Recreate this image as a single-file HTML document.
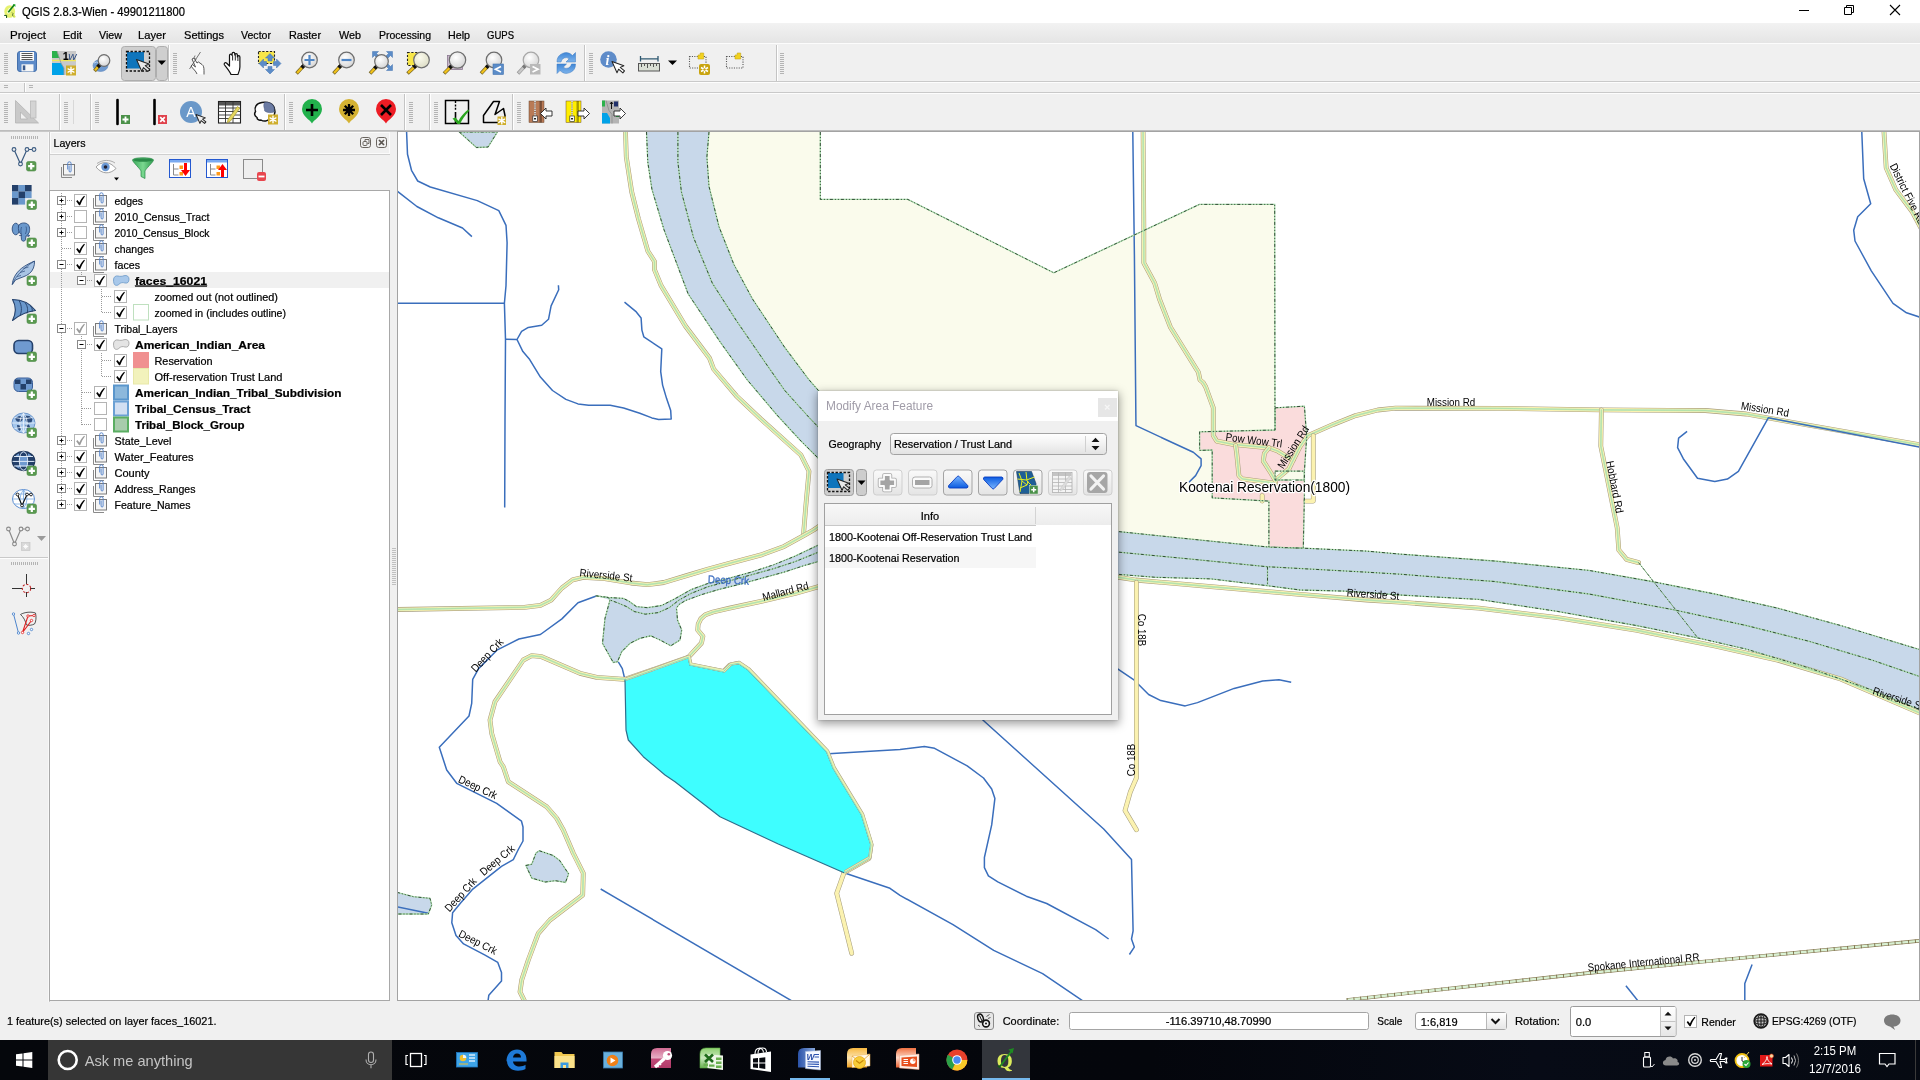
<!DOCTYPE html>
<html><head><meta charset="utf-8"><title>QGIS</title>
<style>
*{box-sizing:border-box;margin:0;padding:0}
html,body{width:1920px;height:1080px;overflow:hidden;background:#f0f0f0;font-family:"Liberation Sans",sans-serif;font-size:11px;color:#000}
.abs{position:absolute}
svg{will-change:transform}
.k text{stroke:#000;stroke-width:.22px}
.k text.n{stroke:none}
#title{left:0;top:0;width:1920px;height:23px;background:#fff}
#title .t{left:22px;top:4px;font-size:12px;letter-spacing:-0.1px}
#menu{left:0;top:23px;width:1920px;height:21px;background:linear-gradient(#f1f1f1,#e6e6e6);border-bottom:1px solid #fdfdfd}
#menu span{position:absolute;top:5px;font-size:11px}
.hline{position:absolute;left:0;width:1920px;height:1px}
#layers-title{left:51px;top:133px;width:339px;height:21px;background:#f0f0f0;border:1px solid #fafafa}
#tree{left:50px;top:190px;width:340px;height:811px;background:#fff;border:1px solid #a3a3a3}
#map{left:397px;top:131px;width:1523px;height:870px;background:#fff;border:1px solid #a3a3a3;overflow:hidden}
#status{left:0;top:1002px;width:1920px;height:38px;background:#f0f0f0}
#taskbar{left:0;top:1040px;width:1920px;height:40px;background:#0b0f1c}
.row{position:absolute;left:0;height:16px;width:338px;white-space:nowrap}
.row span{position:absolute;top:2px;font-size:11px}
.b{font-weight:bold}
</style></head><body>
<svg class="k" width="1920" height="132" viewBox="0 0 1920 132" style="position:absolute;left:0;top:0;font-family:'Liberation Sans',sans-serif">
<defs><radialGradient id="lg" cx="0.4" cy="0.35" r="0.7"><stop offset="0" stop-color="#fff"/><stop offset="1" stop-color="#d4d4d4"/></radialGradient><radialGradient id="lgy" cx="0.4" cy="0.35" r="0.7"><stop offset="0" stop-color="#fbfbee"/><stop offset="1" stop-color="#dcdcc4"/></radialGradient><linearGradient id="rf" x1="0" y1="0" x2="0" y2="1"><stop offset="0" stop-color="#3f86d6"/><stop offset="1" stop-color="#7db4ec"/></linearGradient></defs>
<rect x="0" y="0" width="1920" height="23" fill="#fff"/>
<ellipse cx="9.700" cy="11.500" rx="5.400" ry="6.300" fill="#e6f270"/><ellipse cx="9.200" cy="10.800" rx="1.600" ry="3.200" fill="#f8fbd8" transform="rotate(25 9.2 10.8)"/><path d="M12.500,13.500l2.300,4" stroke="#d8e860" stroke-width="2.200"/><path d="M12,12.500l1.200,1.300 -1,1.200 1.200,1.300" stroke="#3a5a2a" stroke-width="0.700" fill="none"/>
<path d="M8.300,12.200L14.300,4.800" stroke="#12801a" stroke-width="1.700"/><path d="M12.800,4.300h2.600v2.600z" fill="#18a020"/><path d="M4.200,15.400h2.400v2.600" stroke="#0c4a10" stroke-width="1" fill="none"/>
<text x="22" y="15.5" font-size="12.2" fill="#000" textLength="163" lengthAdjust="spacingAndGlyphs">QGIS 2.8.3-Wien - 49901211800</text>
<path d="M1799,10.5h10" stroke="#000" stroke-width="1"/>
<path d="M1844.5,7.5h7v7h-7zM1846.5,7.5v-2h7v7h-2" stroke="#000" stroke-width="1" fill="none"/>
<path d="M1890,5l10,10M1900,5l-10,10" stroke="#000" stroke-width="1.1"/>
<defs><linearGradient id="mg" x1="0" y1="0" x2="0" y2="1"><stop offset="0" stop-color="#f2f2f2"/><stop offset="1" stop-color="#e4e4e4"/></linearGradient></defs>
<rect x="0" y="23" width="1920" height="21" fill="url(#mg)"/>
<rect x="0" y="43" width="1920" height="1" fill="#fcfcfc"/>
<text x="10" y="39" font-size="11" textLength="36" lengthAdjust="spacingAndGlyphs">Project</text>
<text x="63" y="39" font-size="11" textLength="19" lengthAdjust="spacingAndGlyphs">Edit</text>
<text x="99" y="39" font-size="11" textLength="23" lengthAdjust="spacingAndGlyphs">View</text>
<text x="138" y="39" font-size="11" textLength="28" lengthAdjust="spacingAndGlyphs">Layer</text>
<text x="184" y="39" font-size="11" textLength="40" lengthAdjust="spacingAndGlyphs">Settings</text>
<text x="241" y="39" font-size="11" textLength="30" lengthAdjust="spacingAndGlyphs">Vector</text>
<text x="289" y="39" font-size="11" textLength="32" lengthAdjust="spacingAndGlyphs">Raster</text>
<text x="339" y="39" font-size="11" textLength="22" lengthAdjust="spacingAndGlyphs">Web</text>
<text x="379" y="39" font-size="11" textLength="52" lengthAdjust="spacingAndGlyphs">Processing</text>
<text x="448" y="39" font-size="11" textLength="22" lengthAdjust="spacingAndGlyphs">Help</text>
<text x="487" y="39" font-size="11" textLength="27" lengthAdjust="spacingAndGlyphs">GUPS</text>
<rect x="0" y="44" width="1920" height="88" fill="#f0f0f0"/>
<rect x="0" y="81" width="1920" height="1" fill="#c9c9c9"/>
<rect x="0" y="82" width="1920" height="1" fill="#fdfdfd"/>
<rect x="0" y="92" width="1920" height="1" fill="#c9c9c9"/>
<rect x="0" y="93" width="1920" height="1" fill="#fdfdfd"/>
<rect x="0" y="130" width="1920" height="1" fill="#bdbdbd"/>
<rect x="0" y="131" width="1920" height="1" fill="#c8c8c8"/>
<path d="M4,53.5h4M4,55.5h4M4,57.5h4M4,59.5h4M4,61.5h4M4,63.5h4M4,65.5h4M4,67.5h4M4,69.5h4M4,71.5h4M4,73.5h4" stroke="#b4b4b4" stroke-width="1" fill="none"/>
<rect x="17.5" y="51.5" width="19" height="20" rx="2.5" fill="#5c8ac8" stroke="#4470ac"/>
<rect x="20" y="52" width="14" height="8.700" fill="#fbfbfb"/><path d="M21.500,53.500h11M21.500,55.500h11M21.500,57.500h11M21.500,59.500h11" stroke="#555" stroke-width="1"/>
<rect x="21.500" y="64.300" width="12" height="7.200" fill="#f6f6f6"/><rect x="22.800" y="65.400" width="2.500" height="4.800" fill="#3a5a8c"/>
<rect x="52" y="51" width="24" height="24" fill="#c9c9c9"/><path d="M52,51h5l2.5,7h-7.5z" fill="#2bb24c"/><path d="M52,63h9l3,5v7h-12z" fill="#00a2e8"/><path d="M52,60.5h24" stroke="#f2e85a" stroke-width="1.4"/><path d="M57,51l4,12 3,5v7" stroke="#9a9a9a" stroke-width="0.8" fill="none"/>
<text x="63" y="60" font-size="10" font-weight="bold" fill="#000">1</text><text x="68" y="60" font-size="9" font-style="italic" fill="#20407a" class="n">W</text>
<rect x="66.0" y="65.5" width="10.0" height="10.0" fill="#cfae2c"/>
<path d="M71.0,67.3v6.4M68.1,68.9l5.8,3.2M73.9,68.9l-5.8,3.2" stroke="#fff" stroke-width="1.4" stroke-linecap="round"/>
<ellipse cx="100.500" cy="65.500" rx="7.500" ry="6" fill="#6f9ad0" stroke="#5a84bc" stroke-width="0.600"/><path d="M94,63q3,-2 5,0t5,1" stroke="#b8d0ec" fill="none"/>
<path d="M99.8,64.7L94.5,71.0" stroke="#7a6a28" stroke-width="3.6" stroke-linecap="butt"/>
<path d="M99.2,65.3L95.1,70.4" stroke="#f2c21a" stroke-width="2.2"/>
<path d="M100.3,64.2L97.6,66.9" stroke="#111" stroke-width="3.6"/>
<circle cx="104.0" cy="60.5" r="5.8" fill="url(#lg)" stroke="#6e6e6e" stroke-width="1.2"/>
<rect x="121.5" y="46.500" width="34" height="34" rx="3" fill="#cfcfcf" stroke="#aeaeae"/>
<rect x="156.5" y="46.500" width="11" height="34" rx="3" fill="#cfcfcf" stroke="#aeaeae"/>
<rect x="127" y="52" width="17" height="16.500" fill="#0f75bc"/>
<rect x="126.5" y="51.500" width="23" height="19.500" fill="none" stroke="#111" stroke-width="1.3" stroke-dasharray="2.4 1.6"/>
<path d="M136.5,59.5 L136.5,72.5 L139.5,69.7 L142.1,75.1 L144.5,73.9 L141.9,68.7 L146.1,68.7Z" fill="#e8e8e8" stroke="#222" stroke-width="1" stroke-linejoin="round" transform="rotate(-24 136.5 59.5)"/>
<path d="M157.500,60.500h8.500l-4.250,4.500z" fill="#000"/>
<path d="M168.5,45V81" stroke="#c4c4c4"/><path d="M169.5,45V81" stroke="#fff"/>
<path d="M173,53.5h4M173,55.5h4M173,57.5h4M173,59.5h4M173,61.5h4M173,63.5h4M173,65.5h4M173,67.5h4M173,69.5h4M173,71.5h4M173,73.5h4" stroke="#b4b4b4" stroke-width="1" fill="none"/>
<path d="M197,74c-1,-3 -4,-5 -6,-8l1.500,-1.500 3,2.500 -3.500,-8 2,-1 3,5 1.500,-1 3.500,2.500c1.500,1 2,3 2,6v4" fill="#fff" stroke="#444" stroke-width="0.9" stroke-linejoin="round"/><path d="M200.500,52l-11,17M195,55.500q-2,2.500 1,4" stroke="#555" stroke-width="0.8" fill="none"/>
<path d="M231,74.500c-1.500,-3.500 -4.500,-7 -6.500,-9.500c-1,-1.500 0.500,-3 2,-2l3,3v-10.500c0,-1.800 2.600,-1.800 2.600,0v-1.800c0,-1.800 2.700,-1.800 2.700,0v1.200c0,-1.700 2.600,-1.700 2.600,0v2c0,-1.600 2.500,-1.600 2.500,0v10c0,3 -1,5 -2,7.600z" fill="#fff" stroke="#111" stroke-width="1.200" stroke-linejoin="round"/><path d="M232.600,55.500v5M235.300,54.500v6M237.900,56v5" stroke="#111" stroke-width="0.9"/>
<rect x="258.500" y="51.500" width="16" height="12" fill="#f7e648" stroke="#222" stroke-width="1.1" stroke-dasharray="2.2 1.600"/>
<path d="M270,53.500l4.500,4.500h-2.500v3h-4v-3h-2.500zM281,63.500l-4.500,4.500v-2.500h-3v-4h3v-2.500zM270,74l-4.500,-4.500h2.500v-3h4v3h2.500zM259,63.500l4.500,-4.500v2.500h3v4h-3v2.500z" fill="#5b8cc8" stroke="#4474b0" stroke-width="0.5"/>
<path d="M303.9,65.6L296.5,73.5" stroke="#7a6a28" stroke-width="3.6" stroke-linecap="butt"/>
<path d="M303.3,66.2L297.1,72.9" stroke="#f2c21a" stroke-width="2.2"/>
<path d="M304.4,65.1L301.7,67.8" stroke="#111" stroke-width="3.6"/>
<circle cx="309.5" cy="60.0" r="7.8" fill="url(#lg)" stroke="#6e6e6e" stroke-width="1.2"/>
<path d="M304.500,60h10M309.500,55v10" stroke="#4f86c6" stroke-width="2.200"/>
<path d="M340.9,65.6L333.5,73.5" stroke="#7a6a28" stroke-width="3.6" stroke-linecap="butt"/>
<path d="M340.3,66.2L334.1,72.9" stroke="#f2c21a" stroke-width="2.2"/>
<path d="M341.4,65.1L338.7,67.8" stroke="#111" stroke-width="3.6"/>
<circle cx="346.5" cy="60.0" r="7.8" fill="url(#lg)" stroke="#6e6e6e" stroke-width="1.2"/>
<path d="M341.500,60h10" stroke="#4f86c6" stroke-width="2.200"/>
<path d="M372.500,51.500h6l-2,2 3,3 -2,2 -3,-3 -2,2zM392.500,51.500v6l-2,-2 -3,3 -2,-2 3,-3 -2,-2zM392.500,70.500h-6l2,-2 -3,-3 2,-2 3,3 2,-2z" fill="#5b8cc8" stroke="#4474b0" stroke-width="0.500"/>
<path d="M376.6,66.4L370.0,73.5" stroke="#7a6a28" stroke-width="3.6" stroke-linecap="butt"/>
<path d="M376.0,67.0L370.6,72.9" stroke="#f2c21a" stroke-width="2.2"/>
<path d="M377.1,65.9L374.4,68.6" stroke="#111" stroke-width="3.6"/>
<circle cx="381.5" cy="61.5" r="6.8" fill="url(#lg)" stroke="#6e6e6e" stroke-width="1.2"/>
<rect x="407.500" y="52.500" width="14" height="13" fill="#f7e648" stroke="#222" stroke-width="1.100" stroke-dasharray="2.200 1.600"/>
<path d="M415.9,65.6L407.5,73.5" stroke="#7a6a28" stroke-width="3.6" stroke-linecap="butt"/>
<path d="M415.3,66.2L408.1,72.9" stroke="#f2c21a" stroke-width="2.2"/>
<path d="M416.4,65.1L413.7,67.8" stroke="#111" stroke-width="3.6"/>
<circle cx="421.5" cy="60.0" r="7.8" fill="url(#lgy)" stroke="#6e6e6e" stroke-width="1.2"/>
<rect x="447.500" y="55.500" width="15" height="14" fill="#c9b8cc" stroke="#8a7890" stroke-width="0.800"/>
<path d="M451.6,65.9L444.0,73.5" stroke="#7a6a28" stroke-width="3.6" stroke-linecap="butt"/>
<path d="M451.0,66.5L444.6,72.9" stroke="#f2c21a" stroke-width="2.2"/>
<path d="M452.1,65.4L449.4,68.1" stroke="#111" stroke-width="3.6"/>
<circle cx="457.5" cy="60.0" r="8.2" fill="url(#lg)" stroke="#6e6e6e" stroke-width="1.2"/>
<path d="M488.4,65.6L481.0,73.5" stroke="#7a6a28" stroke-width="3.6" stroke-linecap="butt"/>
<path d="M487.8,66.2L481.6,72.9" stroke="#f2c21a" stroke-width="2.2"/>
<path d="M488.9,65.1L486.2,67.8" stroke="#111" stroke-width="3.6"/>
<circle cx="494.0" cy="60.0" r="7.8" fill="url(#lg)" stroke="#6e6e6e" stroke-width="1.2"/>
<rect x="493" y="64" width="10.500" height="10.500" fill="#5b8cc8" stroke="#4474b0" stroke-width="0.600"/><path d="M501,66.500l-5.500,2.800 5.500,2.800" stroke="#fff" stroke-width="1.700" fill="none"/>
<path d="M525.4,65.6L518.0,73.5" stroke="#9a9a9a" stroke-width="3.6" stroke-linecap="butt"/>
<path d="M524.8,66.2L518.6,72.9" stroke="#c8c8c8" stroke-width="2.2"/>
<path d="M525.9,65.1L523.2,67.8" stroke="#777" stroke-width="3.6"/>
<circle cx="531.0" cy="60.0" r="7.8" fill="url(#lg)" stroke="#a8a8a8" stroke-width="1.2"/>
<rect x="530" y="64" width="10.500" height="10.500" fill="#b9b9b9"/><path d="M532.500,66.500l5.500,2.800 -5.500,2.800" stroke="#fff" stroke-width="1.700" fill="none"/>
<path d="M557,62a9,9 0 0,1 15.500,-6.500l3,-3v9.500h-9.500l3.200,-3.200a5,5 0 0,0 -8.200,3.200z" fill="url(#rf)" stroke="#3a78c0" stroke-width="0.500"/>
<path d="M575.500,64a9,9 0 0,1 -15.500,6.500l-3,3v-9.500h9.500l-3.200,3.200a5,5 0 0,0 8.200,-3.200z" fill="url(#rf)" stroke="#3a78c0" stroke-width="0.500"/>
<path d="M584.5,45V81" stroke="#c4c4c4"/><path d="M585.5,45V81" stroke="#fff"/>
<path d="M589,53.5h4M589,55.5h4M589,57.5h4M589,59.5h4M589,61.5h4M589,63.5h4M589,65.5h4M589,67.5h4M589,69.5h4M589,71.5h4M589,73.5h4" stroke="#b4b4b4" stroke-width="1" fill="none"/>
<circle cx="608.500" cy="59.500" r="8.300" fill="#5f8cc9"/><text x="605.500" y="65" font-size="14" font-weight="bold" font-style="italic" font-family="Liberation Serif,serif" fill="#fff" class="n">i</text>
<path d="M612.0,61.5 L612.0,73.8 L614.9,71.2 L617.3,76.3 L619.6,75.2 L617.1,70.2 L621.1,70.2Z" fill="#fff" stroke="#222" stroke-width="1" stroke-linejoin="round" transform="rotate(-24 612.0 61.5)"/>
<path d="M640.500,56v5.500M658,56v5.500M640.500,58.800h17.500" stroke="#2e5870" stroke-width="1.300"/>
<rect x="638.500" y="63.500" width="21" height="7.500" fill="#dadfd5" stroke="#555" stroke-width="1"/><path d="M641.500,64v3M644.500,64v2M647.500,64v4M650.500,64v2M653.500,64v3M656.500,64v2" stroke="#444" stroke-width="0.900"/>
<path d="M668,60.500h9l-4.500,4.600z" fill="#000"/>
<rect x="689.5" y="56.500" width="16.500" height="11.500" fill="none" stroke="#555" stroke-width="1.100" stroke-dasharray="1.100 1.300"/>
<path d="M698.0,55h2.200v-2h3.500v6h-5.700z" fill="#f2d21e" stroke="#c8a818" stroke-width="0.600"/>
<rect x="726.5" y="56.500" width="16.500" height="11.500" fill="none" stroke="#555" stroke-width="1.100" stroke-dasharray="1.100 1.300"/>
<path d="M735.0,55h2.200v-2h3.500v6h-5.700z" fill="#f2d21e" stroke="#c8a818" stroke-width="0.600"/>
<rect x="699" y="64" width="11" height="11" rx="2" fill="#c9a40e"/><path d="M704.500,65.500v8M701,67.500l7,4M708,67.500l-7,4" stroke="#fff" stroke-width="1.500"/><circle cx="704.500" cy="69.500" r="1.200" fill="#c9a40e"/>
<path d="M776.5,45V81" stroke="#c4c4c4"/><path d="M777.5,45V81" stroke="#fff"/>
<path d="M780,53.5h4M780,55.5h4M780,57.5h4M780,59.5h4M780,61.5h4M780,63.5h4M780,65.5h4M780,67.5h4M780,69.5h4M780,71.5h4M780,73.5h4" stroke="#b4b4b4" stroke-width="1" fill="none"/>
<path d="M4,85.500h4M4,87.500h4M29,85.500h4M29,87.500h4" stroke="#b4b4b4"/>
<path d="M24.5,83V92" stroke="#c4c4c4"/><path d="M25.5,83V92" stroke="#fff"/>
<path d="M4,102.5h4M4,104.5h4M4,106.5h4M4,108.5h4M4,110.5h4M4,112.5h4M4,114.5h4M4,116.5h4M4,118.5h4M4,120.5h4M4,122.5h4" stroke="#b4b4b4" stroke-width="1" fill="none"/>
<path d="M15.500,100.500v22.500h23zM20.500,112v7h7z" fill="#c9c9c9" stroke="#b4b4b4" stroke-width="0.800" fill-rule="evenodd"/><rect x="30.500" y="101" width="5.500" height="17" fill="#d4d4d4" stroke="#b8b8b8" stroke-width="0.800"/>
<path d="M59.5,94V130" stroke="#c4c4c4"/><path d="M60.5,94V130" stroke="#fff"/>
<path d="M64,102.5h4M64,104.5h4M64,106.5h4M64,108.5h4M64,110.5h4M64,112.5h4M64,114.5h4M64,116.5h4M64,118.5h4M64,120.5h4M64,122.5h4" stroke="#b4b4b4" stroke-width="1" fill="none"/>
<path d="M73.500,100v24" stroke="#d8d8d8"/>
<path d="M90.5,94V130" stroke="#c4c4c4"/><path d="M91.5,94V130" stroke="#fff"/>
<path d="M95,102.5h4M95,104.5h4M95,106.5h4M95,108.5h4M95,110.5h4M95,112.5h4M95,114.5h4M95,116.5h4M95,118.5h4M95,120.5h4M95,122.5h4" stroke="#b4b4b4" stroke-width="1" fill="none"/>
<path d="M117.500,100v24" stroke="#000" stroke-width="2.600" stroke-linecap="round"/><rect x="121" y="115" width="9" height="9" fill="#4a9048"/><path d="M122.500,119.500h6M125.500,116.500v6" stroke="#fff" stroke-width="1.800"/>
<path d="M154.500,100v24" stroke="#000" stroke-width="2.600" stroke-linecap="round"/><rect x="158" y="115" width="9" height="9" fill="#e0424c"/><path d="M160.200,117.200l4.600,4.600M164.800,117.200l-4.600,4.600" stroke="#fff" stroke-width="1.700"/>
<circle cx="191" cy="112" r="11" fill="#6a98c9"/><text x="191" y="117" font-size="14" fill="#fff" text-anchor="middle" class="n">A</text>
<path d="M196.0,114.5 L196.0,124.2 L198.2,122.2 L200.2,126.2 L202.0,125.3 L200.1,121.4 L203.2,121.4Z" fill="#eee" stroke="#222" stroke-width="1" stroke-linejoin="round" transform="rotate(-24 196.0 114.5)"/>
<rect x="218.500" y="101.500" width="22" height="21.500" fill="#fff" stroke="#222" stroke-width="1.100"/><rect x="219" y="102" width="21" height="3.500" fill="#555"/><path d="M218.500,108h22M218.500,111.500h22M218.500,115h22M218.500,118.500h22M225.500,101.500v21.500M233,101.500v21.500" stroke="#333" stroke-width="0.900"/>
<path d="M237.500,106.500l2.200,1.800 -9,12.500 -3.400,2 0.800,-3.600z" fill="#e6d860" stroke="#a89a30" stroke-width="0.700"/>
<path d="M262,102.500c-6,1 -8,5 -6.500,9c-2,3 0,5 1.500,6c0,2 2,3 4,2.500c3,2 7,1 8,-1c5,-1 7,-6 5.500,-10c-1,-5 -6,-7.500 -12.500,-6.500z" fill="#fff" stroke="#111" stroke-width="1.500"/><path d="M264.500,102.500c4,-1 9,1 9.700,6l0,3.500c-3,1 -7,1 -9.500,-1c0,-3 -2,-5 -0.200,-8.500z" fill="#6b7ba3" stroke="#4a5a80" stroke-width="0.500"/>
<rect x="268.0" y="114.5" width="10.0" height="10.0" fill="#cfae2c"/>
<path d="M273.0,116.3v6.4M270.1,117.9l5.8,3.2M275.9,117.9l-5.8,3.2" stroke="#fff" stroke-width="1.4" stroke-linecap="round"/>
<path d="M284.5,94V130" stroke="#c4c4c4"/><path d="M285.5,94V130" stroke="#fff"/>
<path d="M289,102.5h4M289,104.5h4M289,106.5h4M289,108.5h4M289,110.5h4M289,112.5h4M289,114.5h4M289,116.5h4M289,118.5h4M289,120.5h4M289,122.5h4" stroke="#b4b4b4" stroke-width="1" fill="none"/>
<path d="M312.0,123.500c-2,-4 -10,-7 -10,-14.500a10,10 0 0,1 20,0c0,7.500 -8,10.500 -10,14.500z" fill="#22b14c"/>
<path d="M306,110h12M312,104v12" stroke="#000" stroke-width="2.600"/>
<path d="M349.0,123.500c-2,-4 -10,-7 -10,-14.500a10,10 0 0,1 20,0c0,7.500 -8,10.500 -10,14.500z" fill="#d4b232"/>
<path d="M343,110h12M349,104v12M344.800,105.800l8.400,8.400M353.200,105.800l-8.400,8.400" stroke="#000" stroke-width="2.300"/>
<path d="M386.0,123.500c-2,-4 -10,-7 -10,-14.500a10,10 0 0,1 20,0c0,7.500 -8,10.500 -10,14.500z" fill="#ed1c24"/>
<path d="M381,105l10,10M391,105l-10,10" stroke="#000" stroke-width="2.600"/>
<path d="M404.5,94V130" stroke="#c4c4c4"/><path d="M405.5,94V130" stroke="#fff"/>
<path d="M409,102.5h4M409,104.5h4M409,106.5h4M409,108.5h4M409,110.5h4M409,112.5h4M409,114.5h4M409,116.5h4M409,118.5h4M409,120.5h4M409,122.5h4" stroke="#b4b4b4" stroke-width="1" fill="none"/>
<path d="M429.5,94V130" stroke="#c4c4c4"/><path d="M430.5,94V130" stroke="#fff"/>
<path d="M434,102.5h4M434,104.5h4M434,106.5h4M434,108.5h4M434,110.5h4M434,112.5h4M434,114.5h4M434,116.5h4M434,118.5h4M434,120.5h4M434,122.5h4" stroke="#b4b4b4" stroke-width="1" fill="none"/>
<rect x="445.500" y="100.500" width="23" height="23" fill="none" stroke="#000" stroke-width="1.500"/><path d="M455.500,101v10" stroke="#000" stroke-width="1.400" stroke-dasharray="2 1.400"/><path d="M455.500,112v11" stroke="#000" stroke-width="1.600"/><path d="M452.500,118.500l3,-1 3,3.500c2,-4 6,-9 10,-11.500l0.500,1.500c-4,4 -7,9 -9,13h-2.500z" fill="#2aa51e"/>
<path d="M493.500,101.500h6l-4.500,13 8.500,-6 1.500,7v7h-21.500v-7z" fill="none" stroke="#000" stroke-width="1.500" stroke-linejoin="round"/>
<rect x="497.5" y="116.5" width="8.5" height="8.5" fill="#cfae2c"/>
<path d="M501.8,117.5v6.4M498.9,119.2l5.8,3.2M504.6,119.2l-5.8,3.2" stroke="#fff" stroke-width="1.4" stroke-linecap="round"/>
<path d="M512.5,94V130" stroke="#c4c4c4"/><path d="M513.5,94V130" stroke="#fff"/>
<path d="M517,102.5h4M517,104.5h4M517,106.5h4M517,108.5h4M517,110.5h4M517,112.5h4M517,114.5h4M517,116.5h4M517,118.5h4M517,120.5h4M517,122.5h4" stroke="#b4b4b4" stroke-width="1" fill="none"/>
<rect x="529.0" y="101" width="15" height="21.500" fill="#b97a56" stroke="#6a4a30" stroke-width="0.500"/>
<rect x="539.5" y="101" width="2.400" height="21.500" fill="#000" opacity="0.35"/>
<path d="M535.0,101v16" stroke="#fff" stroke-width="2" stroke-dasharray="1.200 1"/><path d="M535.0,101v16" stroke="#555" stroke-width="0.600"/>
<rect x="532.8" y="116" width="4.500" height="5.500" fill="#fff" stroke="#333" stroke-width="0.700"/><rect x="534.0" y="118" width="2" height="1.500" fill="#222"/>
<path d="M552.0,111h-6v-3l-5.500,5.500 5.500,5.500v-3h6z" fill="#fff" stroke="#222" stroke-width="0.900"/>
<rect x="566.0" y="101" width="15" height="21.500" fill="#ffee00" stroke="#6a4a30" stroke-width="0.500"/>
<rect x="576.5" y="101" width="2.400" height="21.500" fill="#000" opacity="0.35"/>
<path d="M572.0,101v16" stroke="#fff" stroke-width="2" stroke-dasharray="1.200 1"/><path d="M572.0,101v16" stroke="#555" stroke-width="0.600"/>
<rect x="569.8" y="116" width="4.500" height="5.500" fill="#fff" stroke="#333" stroke-width="0.700"/><rect x="571.0" y="118" width="2" height="1.500" fill="#222"/>
<path d="M578.0,111h6v-3l5.500,5.500 -5.500,5.500v-3h-6z" fill="#fff" stroke="#222" stroke-width="0.900"/>
<rect x="602" y="100.500" width="17" height="23" fill="#b4b4b4"/><path d="M602,100.500h3v6h-3z" fill="#2bb24c"/><path d="M602,113h5l3,5v5.500h-8z" fill="#00a2e8"/><path d="M616,112h3v5h-3z" fill="#2bb24c"/><path d="M606,100.500l3,10 3,4v9" stroke="#8a8a8a" fill="none" stroke-width="0.800"/><path d="M611.500,102v7M610,104l1.500,-2 1.500,2" stroke="#000" stroke-width="0.900" fill="none"/><rect x="614" y="101.500" width="4" height="5" fill="#20306a"/>
<path d="M614,111h6v-3l5.500,5.500 -5.500,5.500v-3h-6z" fill="#fff" stroke="#222" stroke-width="0.900"/>
</svg>
<svg width="49" height="870" viewBox="0 132 49 870" style="position:absolute;left:0;top:132px">
<rect x="0" y="132" width="50" height="870" fill="#f0f0f0"/>
<rect x="48" y="132" width="1" height="870" fill="#f8f8f8"/>
<path d="M11.5,136v3M13.5,136v3M15.5,136v3M17.5,136v3M19.5,136v3M21.5,136v3M23.5,136v3M25.5,136v3M27.5,136v3M29.5,136v3M31.5,136v3M33.5,136v3M35.5,136v3M37.5,136v3" stroke="#b4b4b4"/>
<path d="M14,149.500l6.500,14.500 6.500,-14.500h7" stroke="#3a5a80" stroke-width="1.200" fill="none"/>
<circle cx="14.0" cy="149.5" r="1.900" fill="#f0f0f0" stroke="#3a5a80" stroke-width="1.100"/>
<circle cx="27.0" cy="149.5" r="1.900" fill="#f0f0f0" stroke="#3a5a80" stroke-width="1.100"/>
<circle cx="34.0" cy="149.5" r="1.900" fill="#f0f0f0" stroke="#3a5a80" stroke-width="1.100"/>
<circle cx="20.5" cy="164.0" r="1.900" fill="#f0f0f0" stroke="#3a5a80" stroke-width="1.100"/>
<rect x="26.5" y="161.5" width="9.5" height="9.5" rx="1.8" fill="#5a9a50" stroke="#4a8a44" stroke-width="0.6"/>
<path d="M28.1,166.2h6.3M31.2,163.1v6.3" stroke="#fff" stroke-width="2.2"/>
<rect x="12.0" y="185.0" width="6.600" height="6.600" fill="#24406a"/>
<rect x="18.5" y="185.0" width="6.600" height="6.600" fill="#6a98cc"/>
<rect x="25.0" y="185.0" width="6.600" height="6.600" fill="#24406a"/>
<rect x="12.0" y="191.5" width="6.600" height="6.600" fill="#6a98cc"/>
<rect x="18.5" y="191.5" width="6.600" height="6.600" fill="#24406a"/>
<rect x="25.0" y="191.5" width="6.600" height="6.600" fill="#6a98cc"/>
<rect x="12.0" y="198.0" width="6.600" height="6.600" fill="#24406a"/>
<rect x="18.5" y="198.0" width="6.600" height="6.600" fill="#6a98cc"/>
<rect x="27.0" y="200.0" width="9.5" height="9.5" rx="1.8" fill="#5a9a50" stroke="#4a8a44" stroke-width="0.6"/>
<path d="M28.6,204.8h6.3M31.8,201.6v6.3" stroke="#fff" stroke-width="2.2"/>
<ellipse cx="15.800" cy="229" rx="3.600" ry="5.800" fill="#6a98cc" stroke="#2c4c7c" stroke-width="0.900"/>
<path d="M18.500,226c1,-3 6,-4 9,-2c2.500,2 2.500,6 1.500,9l-1.500,1.500 2,0.800 -0.500,1 -3,-0.500 -0.500,4c-0.500,1.800 -3.500,1.800 -4,0l-0.500,-5.500c-2,-1.500 -3,-5 -2.500,-8.300z" fill="#6a98cc" stroke="#2c4c7c" stroke-width="0.900" stroke-linejoin="round"/>
<path d="M21.500,227c-0.800,2.500 -0.800,5 0,7.500M26,226.500c0.800,2 0.600,5 -0.600,7.500M19,235.500h3" stroke="#2c4c7c" stroke-width="0.700" fill="none"/>
<rect x="27.0" y="238.0" width="9.5" height="9.5" rx="1.8" fill="#5a9a50" stroke="#4a8a44" stroke-width="0.6"/>
<path d="M28.6,242.8h6.3M31.8,239.6v6.3" stroke="#fff" stroke-width="2.2"/>
<path d="M12.300,284.500c0.300,-5.500 3.500,-11.500 9,-16c4.500,-3.500 9,-5.500 13.200,-7.500c0.300,5 -1.500,9.500 -5,12.500c-3.500,3 -9.500,4.200 -14,6.500z" fill="#a8c4e4" stroke="#2c4c7c" stroke-width="0.900" stroke-linejoin="round"/><path d="M12.300,284.500c3,-8 11,-16.500 21.500,-23M17,276.500l4,-1M20,272.500l5,-1.500M23.500,268.500l5,-1.500" stroke="#2c4c7c" stroke-width="0.700" fill="none"/>
<rect x="27.0" y="276.0" width="9.5" height="9.5" rx="1.8" fill="#5a9a50" stroke="#4a8a44" stroke-width="0.6"/>
<path d="M28.6,280.8h6.3M31.8,277.6v6.3" stroke="#fff" stroke-width="2.2"/>
<path d="M12.500,299.500c7,0 16,2 23,11c-8,1 -17,5 -23,10c3,-6 4,-14 0,-21z" fill="#6a98cc" stroke="#24406a" stroke-width="1.100" stroke-linejoin="round"/><path d="M19,300.500c3,5 3,11 1,15M25,302.500c3,4 3,8 2,11M30.500,306c2,2 2,4 1.500,6" stroke="#24406a" stroke-width="0.900" fill="none"/>
<rect x="27.0" y="314.0" width="9.5" height="9.5" rx="1.8" fill="#5a9a50" stroke="#4a8a44" stroke-width="0.6"/>
<path d="M28.6,318.8h6.3M31.8,315.6v6.3" stroke="#fff" stroke-width="2.2"/>
<rect x="14" y="340.500" width="18.500" height="13" rx="4.500" fill="#6f9ad0" stroke="#24406a" stroke-width="1.600"/>
<rect x="27.0" y="352.0" width="9.5" height="9.5" rx="1.8" fill="#5a9a50" stroke="#4a8a44" stroke-width="0.6"/>
<path d="M28.6,356.8h6.3M31.8,353.6v6.3" stroke="#fff" stroke-width="2.2"/>
<rect x="14" y="378" width="18.500" height="13.500" rx="4.500" fill="#6f9ad0" stroke="#3a5e98" stroke-width="1"/><path d="M15,379.500h5.500v4.500h-5.500zM26,379.500h5.500v4.500h-5.500zM20.500,384h5.500v5.500h-5.500z" fill="#24406a"/>
<rect x="27.0" y="390.0" width="9.5" height="9.5" rx="1.8" fill="#5a9a50" stroke="#4a8a44" stroke-width="0.6"/>
<path d="M28.6,394.8h6.3M31.8,391.6v6.3" stroke="#fff" stroke-width="2.2"/>
<ellipse cx="23.500" cy="423" rx="11.500" ry="10" fill="#a4c6ec" stroke="#5a88c4" stroke-width="0.800"/><path d="M15.500,418l3.500,-2 3,0.500 1,3 -2.500,2.500 -3.500,-0.500 -1.500,-2zM24.500,415.500l5,0.500 3,3 -1,3.500 -3.500,0.500 -2.500,-2.500zM17,425l3.500,0.500 0.500,3.500 -1.500,2 -2,-2.500zM25.500,425l3.500,-0.500 1,2.500 -2,3 -1.500,-1z" fill="#2c4c7c"/><path d="M12,423h23M23.500,413v20M14.500,417.500q9,3 18,0M14.500,428.500q9,-3 18,0M23.500,413q-7.500,10 0,20M23.500,413q7.500,10 0,20" stroke="#eef4fc" stroke-width="0.800" fill="none"/>
<rect x="27.0" y="428.0" width="9.5" height="9.5" rx="1.8" fill="#5a9a50" stroke="#4a8a44" stroke-width="0.6"/>
<path d="M28.6,432.8h6.3M31.8,429.6v6.3" stroke="#fff" stroke-width="2.2"/>
<ellipse cx="23.500" cy="461" rx="11" ry="9.500" fill="#6f9ad0" stroke="#1c3458" stroke-width="1.700"/>
<path d="M13,457h6.500v4h-7zM27.500,457h6.500l0.500,4h-7zM12.500,461.800h7v3.700h-6zM27.500,461.800h7l-1,3.700h-6zM19,452.500h9v3.500h-9zM19.500,466.500h8v3h-8z" fill="#24406a"/>
<path d="M12.500,461.400h22M14,456.500h19M14,466h19" stroke="#e8f0fa" stroke-width="0.900" fill="none"/><ellipse cx="23.500" cy="461" rx="4.200" ry="9.300" fill="none" stroke="#e8f0fa" stroke-width="0.900"/>
<rect x="27.0" y="466.0" width="9.5" height="9.5" rx="1.8" fill="#5a9a50" stroke="#4a8a44" stroke-width="0.6"/>
<path d="M28.6,470.8h6.3M31.8,467.6v6.3" stroke="#fff" stroke-width="2.2"/>
<ellipse cx="23.500" cy="499" rx="11" ry="9.500" fill="#fff" stroke="#5a8cd0" stroke-width="1"/><path d="M12.500,499h22M14,494h19M14,504h19M23.500,489.500q-7,9.500 0,19M23.500,489.500q7,9.500 0,19M23.500,489.500v19" stroke="#7aa8e0" stroke-width="0.800" fill="none"/><path d="M17.500,494.500l4.500,11 5,-11h4" stroke="#111" stroke-width="1.100" fill="none"/>
<circle cx="17.5" cy="494.5" r="1.400" fill="#fff" stroke="#111" stroke-width="0.900"/>
<circle cx="27.0" cy="494.5" r="1.400" fill="#fff" stroke="#111" stroke-width="0.900"/>
<circle cx="31.0" cy="494.5" r="1.400" fill="#fff" stroke="#111" stroke-width="0.900"/>
<circle cx="22.0" cy="505.5" r="1.400" fill="#fff" stroke="#111" stroke-width="0.900"/>
<rect x="27.0" y="504.0" width="9.5" height="9.5" rx="1.8" fill="#5a9a50" stroke="#4a8a44" stroke-width="0.6"/>
<path d="M28.6,508.8h6.3M31.8,505.6v6.3" stroke="#fff" stroke-width="2.2"/>
<path d="M8.500,529l6,15 6.500,-15h6.500" stroke="#8a8a8a" stroke-width="1.200" fill="none"/>
<circle cx="8.5" cy="529.0" r="1.900" fill="#f0f0f0" stroke="#8a8a8a" stroke-width="1.100"/>
<circle cx="21.0" cy="529.0" r="1.900" fill="#f0f0f0" stroke="#8a8a8a" stroke-width="1.100"/>
<circle cx="27.5" cy="529.0" r="1.900" fill="#f0f0f0" stroke="#8a8a8a" stroke-width="1.100"/>
<circle cx="14.5" cy="544.0" r="1.900" fill="#f0f0f0" stroke="#8a8a8a" stroke-width="1.100"/>
<rect x="21.500" y="542.500" width="8.500" height="8" fill="#d8d8d8" stroke="#c4c4c4" stroke-width="0.600"/><path d="M25.700,544v5M23.200,546.500h5M24,544.800l3.400,3.400M27.400,544.800l-3.400,3.400" stroke="#fff" stroke-width="0.900"/>
<path d="M37,536h9l-4.500,5z" fill="#9a9a9a"/>
<rect x="0" y="557" width="48" height="1" fill="#c9c9c9"/><rect x="0" y="558" width="48" height="1" fill="#fdfdfd"/>
<path d="M11.5,562v3M13.5,562v3M15.5,562v3M17.5,562v3M19.5,562v3M21.5,562v3M23.5,562v3M25.5,562v3M27.5,562v3M29.5,562v3M31.5,562v3M33.5,562v3M35.5,562v3M37.5,562v3" stroke="#b4b4b4"/>
<path d="M26.500,574v10M26.500,592v5M12,588.500h10M30,588.500h5" stroke="#333" stroke-width="1"/><circle cx="26.500" cy="588.500" r="4.200" fill="none" stroke="#c02020" stroke-width="1.100" stroke-dasharray="2.200 1.600"/>
<path d="M13.500,614l5,19" stroke="#3a78c8" stroke-width="0.900" fill="none"/><path d="M20.500,614.500c4,-2.500 11,-3 15,-1.500c1,4 0.500,9 -1,11c-3,1.500 -6,1.500 -8,1c-1,-4 -3,-8 -6,-10.500z" fill="none" stroke="#444" stroke-width="0.900"/><path d="M22.500,632.500l5.500,-16.500 6,-0.500M22.500,632.500l9,-12" stroke="#e02020" stroke-width="1.100" fill="none"/>
<circle cx="13.5" cy="614.0" r="1.200" fill="#fff" stroke="#3a78c8" stroke-width="0.800"/>
<circle cx="18.5" cy="633.0" r="1.200" fill="#fff" stroke="#3a78c8" stroke-width="0.800"/>
<circle cx="28.5" cy="633.5" r="1.200" fill="#fff" stroke="#3a78c8" stroke-width="0.800"/>
<circle cx="31.5" cy="629.5" r="1.200" fill="#fff" stroke="#3a78c8" stroke-width="0.800"/>
<circle cx="22.5" cy="632.5" r="1.200" fill="#fff" stroke="#e02020" stroke-width="0.800"/>
<circle cx="28.0" cy="616.0" r="1.200" fill="#fff" stroke="#e02020" stroke-width="0.800"/>
<circle cx="34.0" cy="615.5" r="1.200" fill="#fff" stroke="#e02020" stroke-width="0.800"/>
<circle cx="31.5" cy="620.5" r="1.200" fill="#fff" stroke="#e02020" stroke-width="0.800"/>
</svg>
<svg class="k" width="348" height="870" viewBox="49 132 348 870" style="position:absolute;left:49px;top:132px;font-family:'Liberation Sans',sans-serif">
<rect x="49" y="132" width="348" height="870" fill="#f0f0f0"/><rect x="49" y="132" width="1" height="870" fill="#c4c4c4"/>
<rect x="50.500" y="132.500" width="339" height="21" fill="#f0f0f0" stroke="#fbfbfb"/><rect x="50" y="154" width="340" height="1" fill="#cfcfcf"/>
<text x="53.500" y="147" font-size="11" textLength="32" lengthAdjust="spacingAndGlyphs">Layers</text>
<rect x="360.500" y="137.500" width="10" height="10" rx="2.200" fill="none" stroke="#6a6560" stroke-width="1"/><rect x="363" y="141.500" width="4" height="4" rx="1" fill="none" stroke="#6a6560" stroke-width="1"/><path d="M365,141v-1.500h4v4h-1.500" fill="none" stroke="#6a6560" stroke-width="1"/>
<rect x="376.500" y="137.500" width="10" height="10" rx="2.200" fill="none" stroke="#6a6560" stroke-width="1"/><path d="M379,140l5,5M384,140l-5,5" stroke="#5a5550" stroke-width="1.700"/>
<g transform="translate(61.0,161.0) scale(1.00)"><path d="M0.500,6v10.500h10.500" fill="none" stroke="#8a8a8a" stroke-width="1"/><rect x="2.500" y="3.500" width="11" height="10.500" fill="#f4f4f4" stroke="#7a7a7a" stroke-width="1"/><path d="M6.700,8.500v-6a1.700,1.700 0 0,1 3.400,0v7.500a1,1 0 0,1 -2,0v-5.500" fill="none" stroke="#4a7cc8" stroke-width="0.900"/></g>
<path d="M96,167c5,-6 14,-6 20,1.500c-6,6 -14,6 -20,-1.500z" fill="#fff" stroke="#8a8a8a" stroke-width="0.800"/><path d="M97,163.500c6,-4 13,-4 18,-0.500" fill="none" stroke="#9a9a9a" stroke-width="0.800"/><circle cx="105.500" cy="167" r="4.200" fill="#6a98d4"/><circle cx="105.500" cy="167" r="1.800" fill="#223"/><path d="M114,177.500h5l-2.500,3z" fill="#000"/>
<defs><linearGradient id="fg" x1="0" y1="0" x2="1" y2="0"><stop offset="0" stop-color="#3aa85a"/><stop offset="0.500" stop-color="#7ad890"/><stop offset="1" stop-color="#2e9a4e"/></linearGradient></defs>
<path d="M132.500,160c0,-3 21,-3 21,0c0,2 -8,9 -8.500,11v7.500l-4,-2v-5.500c-0.500,-2 -8.500,-9 -8.500,-11z" fill="url(#fg)" stroke="#2a8a48" stroke-width="0.700"/><ellipse cx="143" cy="160" rx="9.500" ry="1.800" fill="#2a8a48"/>
<rect x="169.5" y="159.500" width="21" height="18" fill="#fff" stroke="#2458d0" stroke-width="1"/><rect x="170.0" y="160" width="20" height="2.500" fill="#7aaaf0"/>
<path d="M173.5,164v11h5M173.5,169h5" stroke="#8a8a8a" stroke-width="1" fill="none"/>
<rect x="179.5" y="165.500" width="3.500" height="3.500" fill="#ff9a1a"/><rect x="179.5" y="172" width="3.500" height="3.500" fill="#ff9a1a"/>
<path d="M184.0,163h3v7h3l-4.500,6 -4.500,-6h3z" fill="#f00"/>
<rect x="206.5" y="159.500" width="21" height="18" fill="#fff" stroke="#2458d0" stroke-width="1"/><rect x="207.0" y="160" width="20" height="2.500" fill="#7aaaf0"/>
<path d="M210.5,164v11h5M210.5,169h5" stroke="#8a8a8a" stroke-width="1" fill="none"/>
<rect x="216.5" y="165.500" width="3.500" height="3.500" fill="#ff9a1a"/><rect x="216.5" y="172" width="3.500" height="3.500" fill="#ff9a1a"/>
<path d="M221.0,177h3v-7h3l-4.500,-6 -4.500,6h3z" fill="#f00"/>
<rect x="243.500" y="159.500" width="19" height="19" fill="#eeeeee" stroke="#8a8a8a" stroke-width="1"/><rect x="257" y="172" width="9" height="9" rx="2" fill="#e8464e"/><path d="M258.500,176.500h6" stroke="#fff" stroke-width="1.800"/>
<rect x="49.500" y="190.500" width="340" height="810" fill="#fff" stroke="#a8a8a8"/>
<rect x="50" y="272" width="339" height="16" fill="#f0f0f0"/>
<path d="M61.5,193V505" stroke="#9a9a9a" stroke-width="1" stroke-dasharray="1 1"/>
<path d="M81.5,272V280" stroke="#9a9a9a" stroke-width="1" stroke-dasharray="1 1"/>
<path d="M101.5,289V313" stroke="#9a9a9a" stroke-width="1" stroke-dasharray="1 1"/>
<path d="M81.5,336V425" stroke="#9a9a9a" stroke-width="1" stroke-dasharray="1 1"/>
<path d="M101.5,353V377" stroke="#9a9a9a" stroke-width="1" stroke-dasharray="1 1"/>
<rect x="57.5" y="196.5" width="8" height="8" fill="#fff" stroke="#8a8a8a" stroke-width="1"/>
<path d="M59.5,200.5h4" stroke="#000" stroke-width="1"/>
<path d="M61.5,198.5v4" stroke="#000" stroke-width="1"/>
<path d="M67,200.5H72" stroke="#9a9a9a" stroke-width="1" stroke-dasharray="1 1"/>
<rect x="74.5" y="194.5" width="12" height="12" fill="#fff" stroke="#b4b4b4" stroke-width="1"/>
<path d="M76.2,201.3l1.200,-1.200 2,2.300c1.500,-3 3,-5.200 4.800,-6.700l0.700,0.800c-2,2.500 -3.500,5.500 -4.800,8.800h-1z" fill="#000"/>
<g transform="translate(93.0,192.0) scale(1.00)"><path d="M0.500,6v10.500h10.500" fill="none" stroke="#8a8a8a" stroke-width="1"/><rect x="2.500" y="3.500" width="11" height="10.500" fill="#f4f4f4" stroke="#7a7a7a" stroke-width="1"/><path d="M6.700,8.500v-6a1.700,1.700 0 0,1 3.400,0v7.500a1,1 0 0,1 -2,0v-5.500" fill="none" stroke="#4a7cc8" stroke-width="0.900"/></g>
<text x="114.5" y="204.5" font-size="11" textLength="28.5" lengthAdjust="spacingAndGlyphs">edges</text>
<rect x="57.5" y="212.5" width="8" height="8" fill="#fff" stroke="#8a8a8a" stroke-width="1"/>
<path d="M59.5,216.5h4" stroke="#000" stroke-width="1"/>
<path d="M61.5,214.5v4" stroke="#000" stroke-width="1"/>
<path d="M67,216.5H72" stroke="#9a9a9a" stroke-width="1" stroke-dasharray="1 1"/>
<rect x="74.5" y="210.5" width="12" height="12" fill="#fff" stroke="#b4b4b4" stroke-width="1"/>
<g transform="translate(93.0,208.0) scale(1.00)"><path d="M0.500,6v10.500h10.500" fill="none" stroke="#8a8a8a" stroke-width="1"/><rect x="2.500" y="3.500" width="11" height="10.500" fill="#f4f4f4" stroke="#7a7a7a" stroke-width="1"/><path d="M6.700,8.500v-6a1.700,1.700 0 0,1 3.400,0v7.500a1,1 0 0,1 -2,0v-5.500" fill="none" stroke="#4a7cc8" stroke-width="0.900"/></g>
<text x="114.5" y="220.5" font-size="11" textLength="95.0" lengthAdjust="spacingAndGlyphs">2010_Census_Tract</text>
<rect x="57.5" y="228.5" width="8" height="8" fill="#fff" stroke="#8a8a8a" stroke-width="1"/>
<path d="M59.5,232.5h4" stroke="#000" stroke-width="1"/>
<path d="M61.5,230.5v4" stroke="#000" stroke-width="1"/>
<path d="M67,232.5H72" stroke="#9a9a9a" stroke-width="1" stroke-dasharray="1 1"/>
<rect x="74.5" y="226.5" width="12" height="12" fill="#fff" stroke="#b4b4b4" stroke-width="1"/>
<g transform="translate(93.0,224.0) scale(1.00)"><path d="M0.500,6v10.500h10.500" fill="none" stroke="#8a8a8a" stroke-width="1"/><rect x="2.500" y="3.500" width="11" height="10.500" fill="#f4f4f4" stroke="#7a7a7a" stroke-width="1"/><path d="M6.700,8.500v-6a1.700,1.700 0 0,1 3.400,0v7.500a1,1 0 0,1 -2,0v-5.500" fill="none" stroke="#4a7cc8" stroke-width="0.900"/></g>
<text x="114.5" y="236.5" font-size="11" textLength="95.0" lengthAdjust="spacingAndGlyphs">2010_Census_Block</text>
<path d="M62,248.5H72" stroke="#9a9a9a" stroke-width="1" stroke-dasharray="1 1"/>
<rect x="74.5" y="242.5" width="12" height="12" fill="#fff" stroke="#b4b4b4" stroke-width="1"/>
<path d="M76.2,249.3l1.200,-1.200 2,2.300c1.500,-3 3,-5.200 4.800,-6.700l0.700,0.800c-2,2.500 -3.500,5.500 -4.800,8.800h-1z" fill="#000"/>
<g transform="translate(93.0,240.0) scale(1.00)"><path d="M0.500,6v10.500h10.500" fill="none" stroke="#8a8a8a" stroke-width="1"/><rect x="2.500" y="3.500" width="11" height="10.500" fill="#f4f4f4" stroke="#7a7a7a" stroke-width="1"/><path d="M6.700,8.500v-6a1.700,1.700 0 0,1 3.400,0v7.500a1,1 0 0,1 -2,0v-5.500" fill="none" stroke="#4a7cc8" stroke-width="0.900"/></g>
<text x="114.5" y="252.5" font-size="11" textLength="39.5" lengthAdjust="spacingAndGlyphs">changes</text>
<rect x="57.5" y="260.5" width="8" height="8" fill="#fff" stroke="#8a8a8a" stroke-width="1"/>
<path d="M59.5,264.5h4" stroke="#000" stroke-width="1"/>
<path d="M67,264.5H72" stroke="#9a9a9a" stroke-width="1" stroke-dasharray="1 1"/>
<rect x="74.5" y="258.5" width="12" height="12" fill="#fff" stroke="#b4b4b4" stroke-width="1"/>
<path d="M76.2,265.3l1.200,-1.200 2,2.300c1.500,-3 3,-5.200 4.800,-6.700l0.700,0.800c-2,2.500 -3.500,5.500 -4.800,8.800h-1z" fill="#000"/>
<g transform="translate(93.0,256.0) scale(1.00)"><path d="M0.500,6v10.500h10.500" fill="none" stroke="#8a8a8a" stroke-width="1"/><rect x="2.500" y="3.500" width="11" height="10.500" fill="#f4f4f4" stroke="#7a7a7a" stroke-width="1"/><path d="M6.700,8.500v-6a1.700,1.700 0 0,1 3.400,0v7.500a1,1 0 0,1 -2,0v-5.500" fill="none" stroke="#4a7cc8" stroke-width="0.900"/></g>
<text x="114.5" y="268.5" font-size="11" textLength="25.5" lengthAdjust="spacingAndGlyphs">faces</text>
<rect x="77.5" y="276.5" width="8" height="8" fill="#fff" stroke="#8a8a8a" stroke-width="1"/>
<path d="M79.5,280.5h4" stroke="#000" stroke-width="1"/>
<path d="M87,280.5H92" stroke="#9a9a9a" stroke-width="1" stroke-dasharray="1 1"/>
<rect x="94.5" y="274.5" width="12" height="12" fill="#fff" stroke="#b4b4b4" stroke-width="1"/>
<path d="M96.2,281.3l1.200,-1.200 2,2.300c1.500,-3 3,-5.200 4.800,-6.700l0.700,0.800c-2,2.500 -3.500,5.500 -4.800,8.800h-1z" fill="#000"/>
<path d="M113.5,280.0c0,-3 2,-4.500 4.500,-4c2,0.500 4,0.500 6,-0.300c3,-0.800 5,0.800 5,3.500c0,3 -1.500,4.300 -4,3.800c-2.500,-0.800 -4,-0.500 -6,1.200c-1.500,1.800 -4.500,1.500 -5,-0.700c-0.300,-1.200 -0.500,-2.300 -0.500,-3.500z" fill="#a8c8ea" stroke="#6a98c8" stroke-width="0.800"/>
<text x="135.0" y="284.5" font-size="11" textLength="72.0" lengthAdjust="spacingAndGlyphs" font-weight="bold" text-decoration="underline">faces_16021</text>
<path d="M102,296.5H112" stroke="#9a9a9a" stroke-width="1" stroke-dasharray="1 1"/>
<rect x="114.5" y="290.5" width="12" height="12" fill="#fff" stroke="#b4b4b4" stroke-width="1"/>
<path d="M116.2,297.3l1.200,-1.200 2,2.300c1.500,-3 3,-5.200 4.800,-6.700l0.700,0.800c-2,2.500 -3.500,5.500 -4.800,8.800h-1z" fill="#000"/>
<text x="154.5" y="300.5" font-size="11" textLength="123.5" lengthAdjust="spacingAndGlyphs">zoomed out (not outlined)</text>
<path d="M102,312.5H112" stroke="#9a9a9a" stroke-width="1" stroke-dasharray="1 1"/>
<rect x="114.5" y="306.5" width="12" height="12" fill="#fff" stroke="#b4b4b4" stroke-width="1"/>
<path d="M116.2,313.3l1.200,-1.200 2,2.300c1.500,-3 3,-5.200 4.800,-6.700l0.700,0.800c-2,2.500 -3.500,5.500 -4.800,8.800h-1z" fill="#000"/>
<rect x="133.5" y="304.5" width="15" height="15.500" fill="#ffffff" stroke="#bfe0bf" stroke-width="1"/>
<text x="154.5" y="316.5" font-size="11" textLength="131.5" lengthAdjust="spacingAndGlyphs">zoomed in (includes outline)</text>
<rect x="57.5" y="324.5" width="8" height="8" fill="#fff" stroke="#8a8a8a" stroke-width="1"/>
<path d="M59.5,328.5h4" stroke="#000" stroke-width="1"/>
<path d="M67,328.5H72" stroke="#9a9a9a" stroke-width="1" stroke-dasharray="1 1"/>
<rect x="74.5" y="322.5" width="12" height="12" fill="#fff" stroke="#b4b4b4" stroke-width="1"/>
<path d="M76.2,329.3l1.200,-1.200 2,2.300c1.500,-3 3,-5.200 4.800,-6.700l0.700,0.800c-2,2.500 -3.500,5.500 -4.800,8.800h-1z" fill="#9a9a9a"/>
<g transform="translate(93.0,320.0) scale(1.00)"><path d="M0.500,6v10.500h10.500" fill="none" stroke="#8a8a8a" stroke-width="1"/><rect x="2.500" y="3.500" width="11" height="10.500" fill="#f4f4f4" stroke="#7a7a7a" stroke-width="1"/><path d="M6.700,8.500v-6a1.700,1.700 0 0,1 3.400,0v7.500a1,1 0 0,1 -2,0v-5.500" fill="none" stroke="#4a7cc8" stroke-width="0.900"/></g>
<text x="114.5" y="332.5" font-size="11" textLength="63.0" lengthAdjust="spacingAndGlyphs">Tribal_Layers</text>
<rect x="77.5" y="340.5" width="8" height="8" fill="#fff" stroke="#8a8a8a" stroke-width="1"/>
<path d="M79.5,344.5h4" stroke="#000" stroke-width="1"/>
<path d="M87,344.5H92" stroke="#9a9a9a" stroke-width="1" stroke-dasharray="1 1"/>
<rect x="94.5" y="338.5" width="12" height="12" fill="#fff" stroke="#b4b4b4" stroke-width="1"/>
<path d="M96.2,345.3l1.200,-1.200 2,2.300c1.500,-3 3,-5.200 4.800,-6.700l0.700,0.800c-2,2.500 -3.500,5.500 -4.800,8.800h-1z" fill="#000"/>
<path d="M113.5,344.0c0,-3 2,-4.500 4.500,-4c2,0.500 4,0.500 6,-0.300c3,-0.800 5,0.800 5,3.500c0,3 -1.500,4.300 -4,3.800c-2.500,-0.800 -4,-0.500 -6,1.200c-1.500,1.800 -4.500,1.500 -5,-0.700c-0.300,-1.200 -0.500,-2.300 -0.500,-3.500z" fill="#e4e4e4" stroke="#9a9a9a" stroke-width="0.800"/>
<text x="135.0" y="348.5" font-size="11" textLength="130.0" lengthAdjust="spacingAndGlyphs" font-weight="bold">American_Indian_Area</text>
<path d="M102,360.5H112" stroke="#9a9a9a" stroke-width="1" stroke-dasharray="1 1"/>
<rect x="114.5" y="354.5" width="12" height="12" fill="#fff" stroke="#b4b4b4" stroke-width="1"/>
<path d="M116.2,361.3l1.200,-1.200 2,2.300c1.500,-3 3,-5.200 4.800,-6.700l0.700,0.800c-2,2.500 -3.500,5.500 -4.800,8.800h-1z" fill="#000"/>
<rect x="133.5" y="352.5" width="15" height="15.500" fill="#f09090" stroke="#f09090" stroke-width="1"/>
<text x="154.5" y="364.5" font-size="11" textLength="58.0" lengthAdjust="spacingAndGlyphs">Reservation</text>
<path d="M102,376.5H112" stroke="#9a9a9a" stroke-width="1" stroke-dasharray="1 1"/>
<rect x="114.5" y="370.5" width="12" height="12" fill="#fff" stroke="#b4b4b4" stroke-width="1"/>
<path d="M116.2,377.3l1.200,-1.200 2,2.300c1.500,-3 3,-5.200 4.800,-6.700l0.700,0.800c-2,2.500 -3.500,5.500 -4.800,8.800h-1z" fill="#000"/>
<rect x="133.5" y="368.5" width="15" height="15.500" fill="#f2f2bc" stroke="#e8e8a8" stroke-width="1"/>
<text x="154.5" y="380.5" font-size="11" textLength="128.0" lengthAdjust="spacingAndGlyphs">Off-reservation Trust Land</text>
<path d="M82,392.5H92" stroke="#9a9a9a" stroke-width="1" stroke-dasharray="1 1"/>
<rect x="94.5" y="386.5" width="12" height="12" fill="#fff" stroke="#b4b4b4" stroke-width="1"/>
<path d="M96.2,393.3l1.200,-1.200 2,2.300c1.500,-3 3,-5.200 4.800,-6.700l0.700,0.800c-2,2.500 -3.500,5.500 -4.800,8.800h-1z" fill="#000"/>
<rect x="114.0" y="385.5" width="14" height="14" fill="#8cb8dc" stroke="#5a96cc" stroke-width="2"/>
<text x="135.0" y="396.5" font-size="11" textLength="206.5" lengthAdjust="spacingAndGlyphs" font-weight="bold">American_Indian_Tribal_Subdivision</text>
<path d="M82,408.5H92" stroke="#9a9a9a" stroke-width="1" stroke-dasharray="1 1"/>
<rect x="94.5" y="402.5" width="12" height="12" fill="#fff" stroke="#b4b4b4" stroke-width="1"/>
<rect x="114.0" y="401.5" width="14" height="14" fill="#d2dff2" stroke="#6aa0d4" stroke-width="2"/>
<text x="135.0" y="412.5" font-size="11" textLength="115.5" lengthAdjust="spacingAndGlyphs" font-weight="bold">Tribal_Census_Tract</text>
<path d="M82,424.5H92" stroke="#9a9a9a" stroke-width="1" stroke-dasharray="1 1"/>
<rect x="94.5" y="418.5" width="12" height="12" fill="#fff" stroke="#b4b4b4" stroke-width="1"/>
<rect x="114.0" y="417.5" width="14" height="14" fill="#a8ccac" stroke="#5aae62" stroke-width="2"/>
<text x="135.0" y="428.5" font-size="11" textLength="109.5" lengthAdjust="spacingAndGlyphs" font-weight="bold">Tribal_Block_Group</text>
<rect x="57.5" y="436.5" width="8" height="8" fill="#fff" stroke="#8a8a8a" stroke-width="1"/>
<path d="M59.5,440.5h4" stroke="#000" stroke-width="1"/>
<path d="M61.5,438.5v4" stroke="#000" stroke-width="1"/>
<path d="M67,440.5H72" stroke="#9a9a9a" stroke-width="1" stroke-dasharray="1 1"/>
<rect x="74.5" y="434.5" width="12" height="12" fill="#fff" stroke="#b4b4b4" stroke-width="1"/>
<path d="M76.2,441.3l1.200,-1.200 2,2.300c1.500,-3 3,-5.200 4.800,-6.700l0.700,0.800c-2,2.500 -3.500,5.500 -4.800,8.800h-1z" fill="#9a9a9a"/>
<g transform="translate(93.0,432.0) scale(1.00)"><path d="M0.500,6v10.500h10.500" fill="none" stroke="#8a8a8a" stroke-width="1"/><rect x="2.500" y="3.500" width="11" height="10.500" fill="#f4f4f4" stroke="#7a7a7a" stroke-width="1"/><path d="M6.700,8.500v-6a1.700,1.700 0 0,1 3.400,0v7.500a1,1 0 0,1 -2,0v-5.500" fill="none" stroke="#4a7cc8" stroke-width="0.900"/></g>
<text x="114.5" y="444.5" font-size="11" textLength="57.0" lengthAdjust="spacingAndGlyphs">State_Level</text>
<rect x="57.5" y="452.5" width="8" height="8" fill="#fff" stroke="#8a8a8a" stroke-width="1"/>
<path d="M59.5,456.5h4" stroke="#000" stroke-width="1"/>
<path d="M61.5,454.5v4" stroke="#000" stroke-width="1"/>
<path d="M67,456.5H72" stroke="#9a9a9a" stroke-width="1" stroke-dasharray="1 1"/>
<rect x="74.5" y="450.5" width="12" height="12" fill="#fff" stroke="#b4b4b4" stroke-width="1"/>
<path d="M76.2,457.3l1.200,-1.200 2,2.300c1.500,-3 3,-5.200 4.800,-6.700l0.700,0.800c-2,2.500 -3.500,5.500 -4.800,8.800h-1z" fill="#000"/>
<g transform="translate(93.0,448.0) scale(1.00)"><path d="M0.500,6v10.500h10.500" fill="none" stroke="#8a8a8a" stroke-width="1"/><rect x="2.500" y="3.500" width="11" height="10.500" fill="#f4f4f4" stroke="#7a7a7a" stroke-width="1"/><path d="M6.700,8.500v-6a1.700,1.700 0 0,1 3.400,0v7.500a1,1 0 0,1 -2,0v-5.500" fill="none" stroke="#4a7cc8" stroke-width="0.900"/></g>
<text x="114.5" y="460.5" font-size="11" textLength="79.0" lengthAdjust="spacingAndGlyphs">Water_Features</text>
<rect x="57.5" y="468.5" width="8" height="8" fill="#fff" stroke="#8a8a8a" stroke-width="1"/>
<path d="M59.5,472.5h4" stroke="#000" stroke-width="1"/>
<path d="M61.5,470.5v4" stroke="#000" stroke-width="1"/>
<path d="M67,472.5H72" stroke="#9a9a9a" stroke-width="1" stroke-dasharray="1 1"/>
<rect x="74.5" y="466.5" width="12" height="12" fill="#fff" stroke="#b4b4b4" stroke-width="1"/>
<path d="M76.2,473.3l1.200,-1.200 2,2.300c1.500,-3 3,-5.200 4.800,-6.700l0.700,0.800c-2,2.500 -3.500,5.500 -4.800,8.800h-1z" fill="#000"/>
<g transform="translate(93.0,464.0) scale(1.00)"><path d="M0.500,6v10.500h10.500" fill="none" stroke="#8a8a8a" stroke-width="1"/><rect x="2.500" y="3.500" width="11" height="10.500" fill="#f4f4f4" stroke="#7a7a7a" stroke-width="1"/><path d="M6.700,8.500v-6a1.700,1.700 0 0,1 3.400,0v7.500a1,1 0 0,1 -2,0v-5.500" fill="none" stroke="#4a7cc8" stroke-width="0.900"/></g>
<text x="114.5" y="476.5" font-size="11" textLength="35.0" lengthAdjust="spacingAndGlyphs">County</text>
<rect x="57.5" y="484.5" width="8" height="8" fill="#fff" stroke="#8a8a8a" stroke-width="1"/>
<path d="M59.5,488.5h4" stroke="#000" stroke-width="1"/>
<path d="M61.5,486.5v4" stroke="#000" stroke-width="1"/>
<path d="M67,488.5H72" stroke="#9a9a9a" stroke-width="1" stroke-dasharray="1 1"/>
<rect x="74.5" y="482.5" width="12" height="12" fill="#fff" stroke="#b4b4b4" stroke-width="1"/>
<path d="M76.2,489.3l1.200,-1.200 2,2.300c1.500,-3 3,-5.200 4.800,-6.700l0.700,0.800c-2,2.500 -3.500,5.500 -4.800,8.800h-1z" fill="#000"/>
<g transform="translate(93.0,480.0) scale(1.00)"><path d="M0.500,6v10.500h10.500" fill="none" stroke="#8a8a8a" stroke-width="1"/><rect x="2.500" y="3.500" width="11" height="10.500" fill="#f4f4f4" stroke="#7a7a7a" stroke-width="1"/><path d="M6.700,8.500v-6a1.700,1.700 0 0,1 3.400,0v7.500a1,1 0 0,1 -2,0v-5.500" fill="none" stroke="#4a7cc8" stroke-width="0.900"/></g>
<text x="114.5" y="492.5" font-size="11" textLength="81.0" lengthAdjust="spacingAndGlyphs">Address_Ranges</text>
<rect x="57.5" y="500.5" width="8" height="8" fill="#fff" stroke="#8a8a8a" stroke-width="1"/>
<path d="M59.5,504.5h4" stroke="#000" stroke-width="1"/>
<path d="M61.5,502.5v4" stroke="#000" stroke-width="1"/>
<path d="M67,504.5H72" stroke="#9a9a9a" stroke-width="1" stroke-dasharray="1 1"/>
<rect x="74.5" y="498.5" width="12" height="12" fill="#fff" stroke="#b4b4b4" stroke-width="1"/>
<path d="M76.2,505.3l1.200,-1.200 2,2.300c1.500,-3 3,-5.200 4.800,-6.700l0.700,0.800c-2,2.500 -3.500,5.500 -4.800,8.800h-1z" fill="#000"/>
<g transform="translate(93.0,496.0) scale(1.00)"><path d="M0.500,6v10.500h10.500" fill="none" stroke="#8a8a8a" stroke-width="1"/><rect x="2.500" y="3.500" width="11" height="10.500" fill="#f4f4f4" stroke="#7a7a7a" stroke-width="1"/><path d="M6.700,8.500v-6a1.700,1.700 0 0,1 3.400,0v7.500a1,1 0 0,1 -2,0v-5.500" fill="none" stroke="#4a7cc8" stroke-width="0.900"/></g>
<text x="114.5" y="508.5" font-size="11" textLength="76.0" lengthAdjust="spacingAndGlyphs">Feature_Names</text>
<path d="M392,548.5h4M392,550.5h4M392,552.5h4M392,554.5h4M392,556.5h4M392,558.5h4M392,560.5h4M392,562.5h4M392,564.5h4M392,566.5h4M392,568.5h4M392,570.5h4M392,572.5h4M392,574.5h4M392,576.5h4M392,578.5h4M392,580.5h4M392,582.5h4M392,584.5h4" stroke="#c0c0c0"/>
</svg>
<div id="map" class="abs">
<svg width="1521" height="868" viewBox="398 132 1521 868" style="position:absolute;left:0;top:0;font-family:'Liberation Sans',sans-serif"><path d="M709.0,132.0 L820.3,132.0 L820.3,199.4 L907.8,199.4 L1053.8,272.8 L1199.4,204.4 L1274.7,204.4 L1275.0,430.0 L1199.6,431.8 L1199.6,450.4 L1212.2,450.0 L1212.2,497.8 L1268.9,501.1 L1268.9,547.1 L1188.9,538.9 L1118.9,531.6 L1040.0,520.0 L960.0,500.0 L900.0,470.0 L860.0,435.0 L818.4,390.5 L809.0,379.8 L784.8,347.5 L752.6,299.2 L733.8,264.3 L719.0,226.7 L709.0,186.4 L706.9,156.9 L709.0,132.0Z" fill="#fafbec"/>
<path d="M1275.1,407.8 L1304.4,406.2 L1306.7,436.7 L1304.4,471.1 L1304.4,495.6 L1303.3,548.2 L1268.9,547.1 L1268.9,501.1 L1212.2,497.8 L1212.2,450.0 L1199.6,450.4 L1199.6,431.8 L1275.1,430.0Z" fill="#fadcdc"/>
<path d="M1275.1,471.1 L1304.4,471.1 L1304.4,480.0 L1275.1,480.0Z" fill="#fafbec"/>
<path d="M646.5,132.0 L647.8,162.2 L651.9,189.1 L663.9,229.4 L688.1,293.8 L720.3,342.2 L747.2,379.8 L776.7,414.7 L800.0,440.0 L830.0,470.0 L870.0,510.0 L940.0,545.0 L1040.0,565.0 L1118.9,574.4 L1155.6,577.3 L1211.0,578.9 L1266.7,585.6 L1300.0,590.0 L1344.4,591.1 L1400.0,595.0 L1478.7,599.4 L1557.4,611.4 L1636.1,625.5 L1695.9,637.5 L1746.2,649.1 L1809.2,668.0 L1872.1,690.1 L1921.0,710.3 L1921.0,650.0 L1840.7,625.5 L1777.7,608.2 L1714.8,594.0 L1651.8,581.5 L1588.9,570.4 L1494.4,561.0 L1400.0,554.1 L1366.7,551.1 L1303.3,548.2 L1268.9,547.1 L1188.9,538.9 L1118.9,531.6 L1040.0,520.0 L960.0,500.0 L900.0,470.0 L860.0,435.0 L818.4,390.5 L809.0,379.8 L784.8,347.5 L752.6,299.2 L733.8,264.3 L719.0,226.7 L709.0,186.4 L706.9,156.9 L709.0,132.0Z" fill="#c8d8ea"/>
<path d="M832.0,539.0 L817.8,545.3 L795.0,556.2 L773.1,565.0 L751.3,572.1 L729.4,578.1 L707.5,583.6 L691.1,589.6 L674.7,598.9 L661.6,605.5 L647.3,607.7 L636.4,606.6 L628.8,601.1 L623.3,598.4 L608.3,597.5 L595.8,595.8 L610.0,600.0 L605.0,618.3 L602.5,643.3 L610.0,656.7 L613.3,662.5 L617.5,661.7 L621.7,651.7 L630.0,643.3 L640.0,638.3 L650.8,635.8 L660.0,640.0 L670.8,645.8 L680.0,640.0 L681.7,630.0 L677.5,620.0 L676.7,610.0 L676.3,608.2 L679.1,604.4 L685.6,600.5 L702.0,594.5 L718.4,589.6 L740.3,584.1 L762.2,578.1 L784.1,572.1 L805.9,565.0 L817.8,561.7 L832.0,558.0Z" fill="#c8d8ea"/>
<path d="M459.3,132.0 L476.5,147.5 L488.0,147.0 L497.4,132.0Z" fill="#c8d8ea"/>
<path d="M525.9,865.5 L531.8,864.2 L536.0,852.9 L539.4,850.8 L552.9,855.4 L559.6,860.4 L568.6,873.9 L565.5,882.4 L555.4,880.7 L545.3,882.0 L531.8,878.1Z" fill="#c8d8ea"/>
<path d="M397.0,892.3 L413.3,896.7 L430.0,898.3 L431.7,905.0 L428.3,914.0 L397.0,914.0Z" fill="#c8d8ea"/>
<path d="M406.6,132.0 L407.5,154.2 L411.5,170.3 L417.7,181.0 L430.3,187.0 L477.3,200.6 L498.8,210.6 L506.0,225.3 L507.1,242.8 L506.0,285.8 L504.4,303.2 L505.5,339.5 L505.0,420.0 L504.7,507.4" fill="none" stroke="#3a6ebc" stroke-width="1.5" stroke-linejoin="round"/>
<path d="M397.0,191.0 L416.9,206.5 L438.3,217.8 L462.5,228.0 L471.9,236.6" fill="none" stroke="#3a6ebc" stroke-width="1.5" stroke-linejoin="round"/>
<path d="M397.0,303.2 L504.4,303.2" fill="none" stroke="#3a6ebc" stroke-width="1.5" stroke-linejoin="round"/>
<path d="M505.5,339.2 L517.0,339.5 L521.6,331.4 L528.3,327.4 L541.7,325.2 L548.5,319.3 L551.1,305.9 L558.7,289.8 L558.4,285.2" fill="none" stroke="#3a6ebc" stroke-width="1.5" stroke-linejoin="round"/>
<path d="M517.0,339.5 L522.9,351.6 L529.7,359.6 L540.4,377.1 L552.5,390.5 L565.9,399.4 L578.0,403.9 L588.7,405.3 L610.2,405.3 L623.6,408.0 L639.8,413.3 L651.9,417.9 L658.6,419.5 L671.2,419.0 L670.7,410.6 L666.6,398.6 L662.6,385.1 L660.7,371.7 L661.8,348.9 L643.8,336.8 L641.9,330.1 L641.1,318.0 L635.7,311.3 L624.5,302.2" fill="none" stroke="#3a6ebc" stroke-width="1.5" stroke-linejoin="round"/>
<path d="M1861.8,132.0 L1863.7,178.8 L1870.7,203.7 L1857.7,216.7 L1853.7,230.2 L1855.0,241.0 L1871.3,270.8 L1893.0,303.3 L1906.5,312.8 L1921.0,317.5" fill="none" stroke="#3a6ebc" stroke-width="1.5" stroke-linejoin="round"/>
<path d="M1625.9,985.7 L1638.1,1001.0" fill="none" stroke="#3a6ebc" stroke-width="1.5" stroke-linejoin="round"/>
<path d="M1752.1,964.5 L1744.8,983.6 L1744.8,1001.0" fill="none" stroke="#3a6ebc" stroke-width="1.5" stroke-linejoin="round"/>
<path d="M1100.0,657.0 L1118.0,669.2 L1134.3,680.2 L1148.6,694.5 L1160.8,700.6 L1185.2,705.9 L1197.5,702.6 L1234.1,688.4 L1262.7,681.0 L1279.0,679.8 L1291.2,682.2" fill="none" stroke="#3a6ebc" stroke-width="1.5" stroke-linejoin="round"/>
<path d="M970.0,708.0 L984.8,721.8 L1103.7,829.0 L1131.5,859.5 L1133.1,930.8 L1131.5,939.0 L1134.3,947.1 L1129.4,954.5" fill="none" stroke="#3a6ebc" stroke-width="1.5" stroke-linejoin="round"/>
<path d="M820.0,754.3 L900.0,749.5 L924.4,746.6 L934.6,748.3 L967.2,765.8 L983.5,778.0 L991.7,789.0 L994.9,798.4 L991.7,824.9 L984.4,857.5 L984.4,867.7 L988.4,875.8 L997.8,881.9 L1026.3,896.2 L1046.7,903.5 L1095.6,929.6 L1108.6,939.0" fill="none" stroke="#3a6ebc" stroke-width="1.5" stroke-linejoin="round"/>
<path d="M844.0,872.7 L890.0,888.3 L900.0,895.4 L953.0,924.7 L993.7,950.4 L1042.6,973.6 L1083.0,1001.0" fill="none" stroke="#3a6ebc" stroke-width="1.5" stroke-linejoin="round"/>
<path d="M600.7,889.0 L792.0,1001.0" fill="none" stroke="#3a6ebc" stroke-width="1.5" stroke-linejoin="round"/>
<path d="M596.3,596.0 L578.0,602.8 L561.9,618.9 L540.4,634.5 L518.9,639.0 L497.4,649.8 L478.6,668.6 L472.7,679.3 L471.7,703.3 L469.0,716.0 L439.3,747.3 L446.7,770.0 L456.7,783.3 L496.7,803.3 L521.5,821.2 L523.0,827.0 L523.0,841.0 L518.3,849.5 L513.3,859.6 L501.5,866.3 L472.8,889.1 L461.0,902.6 L452.6,912.7 L451.8,922.8 L456.0,935.4 L463.6,943.9 L484.6,954.8 L497.8,962.4 L501.5,972.5 L501.5,980.9 L488.8,995.3 L488.0,1001.0" fill="none" stroke="#3a6ebc" stroke-width="1.5" stroke-linejoin="round"/>
<path d="M618.3,661.9 L622.3,668.6 L625.0,680.0" fill="none" stroke="#3a6ebc" stroke-width="1.5" stroke-linejoin="round"/>
<path d="M397.0,906.7 L428.3,913.3" fill="none" stroke="#3a6ebc" stroke-width="1.5" stroke-linejoin="round"/>
<path d="M625.5,132.0 L626.3,156.9 L631.7,191.8 L638.4,218.6 L647.8,250.9 L654.5,261.6 L654.5,269.7 L661.2,285.8 L685.4,326.0 L709.6,358.3 L713.6,369.0 L736.4,395.9 L760.6,418.8 L800.9,455.0 L809.0,471.2 L805.7,507.4 L803.6,533.5" fill="none" stroke="#a69e80" stroke-width="4.8" stroke-linejoin="round" stroke-linecap="round"/>
<path d="M625.5,132.0 L626.3,156.9 L631.7,191.8 L638.4,218.6 L647.8,250.9 L654.5,261.6 L654.5,269.7 L661.2,285.8 L685.4,326.0 L709.6,358.3 L713.6,369.0 L736.4,395.9 L760.6,418.8 L800.9,455.0 L809.0,471.2 L805.7,507.4 L803.6,533.5" fill="none" stroke="#fbf2b0" stroke-width="3.7" stroke-linejoin="round" stroke-linecap="round"/>
<path d="M625.5,132.0 L626.3,156.9 L631.7,191.8 L638.4,218.6 L647.8,250.9 L654.5,261.6 L654.5,269.7 L661.2,285.8 L685.4,326.0 L709.6,358.3 L713.6,369.0 L736.4,395.9 L760.6,418.8 L800.9,455.0 L809.0,471.2 L805.7,507.4 L803.6,533.5" fill="none" stroke="#c6eabc" stroke-width="1.9" stroke-linejoin="round" stroke-linecap="round"/>
<path d="M625.5,132.0 L626.3,156.9 L631.7,191.8 L638.4,218.6 L647.8,250.9 L654.5,261.6 L654.5,269.7 L661.2,285.8 L685.4,326.0 L709.6,358.3 L713.6,369.0 L736.4,395.9 L760.6,418.8 L800.9,455.0 L809.0,471.2 L805.7,507.4 L803.6,533.5" fill="none" stroke="#a4dc9e" stroke-width="0.6" stroke-linejoin="round" stroke-linecap="round"/>
<path d="M840.0,512.0 L813.6,530.0 L805.9,534.4 L784.1,546.4 L762.2,554.6 L729.4,563.4 L707.5,569.4 L685.6,575.9 L663.8,582.5 L647.3,584.7 L630.9,583.0 L604.8,578.6 L583.4,577.3 L572.6,579.9 L561.9,588.0 L551.1,600.1 L540.4,605.4 L524.3,607.3 L397.0,609.5" fill="none" stroke="#a69e80" stroke-width="4.8" stroke-linejoin="round" stroke-linecap="round"/>
<path d="M840.0,512.0 L813.6,530.0 L805.9,534.4 L784.1,546.4 L762.2,554.6 L729.4,563.4 L707.5,569.4 L685.6,575.9 L663.8,582.5 L647.3,584.7 L630.9,583.0 L604.8,578.6 L583.4,577.3 L572.6,579.9 L561.9,588.0 L551.1,600.1 L540.4,605.4 L524.3,607.3 L397.0,609.5" fill="none" stroke="#fbf2b0" stroke-width="3.7" stroke-linejoin="round" stroke-linecap="round"/>
<path d="M840.0,512.0 L813.6,530.0 L805.9,534.4 L784.1,546.4 L762.2,554.6 L729.4,563.4 L707.5,569.4 L685.6,575.9 L663.8,582.5 L647.3,584.7 L630.9,583.0 L604.8,578.6 L583.4,577.3 L572.6,579.9 L561.9,588.0 L551.1,600.1 L540.4,605.4 L524.3,607.3 L397.0,609.5" fill="none" stroke="#c6eabc" stroke-width="1.9" stroke-linejoin="round" stroke-linecap="round"/>
<path d="M840.0,512.0 L813.6,530.0 L805.9,534.4 L784.1,546.4 L762.2,554.6 L729.4,563.4 L707.5,569.4 L685.6,575.9 L663.8,582.5 L647.3,584.7 L630.9,583.0 L604.8,578.6 L583.4,577.3 L572.6,579.9 L561.9,588.0 L551.1,600.1 L540.4,605.4 L524.3,607.3 L397.0,609.5" fill="none" stroke="#a4dc9e" stroke-width="0.6" stroke-linejoin="round" stroke-linecap="round"/>
<path d="M832.0,583.0 L817.8,586.9 L795.0,593.4 L762.2,601.1 L729.4,608.2 L713.0,612.0 L705.3,614.8 L700.9,618.6 L698.2,624.1 L697.7,630.0 L702.9,636.3 L701.5,643.0 L688.3,657.3 L625.0,679.3 L596.7,677.3 L580.0,673.3 L541.7,656.7 L531.7,655.7 L523.3,660.0 L495.0,701.7 L490.0,720.0 L491.7,733.3 L500.0,761.7 L503.3,766.7 L508.3,781.7 L546.7,806.7 L556.7,818.3 L563.3,830.0 L573.3,853.3 L583.3,873.3 L582.7,895.0 L550.0,920.0 L538.3,933.3 L528.3,960.0 L521.7,980.1 L520.0,991.9 L524.5,1001.0" fill="none" stroke="#a69e80" stroke-width="4.8" stroke-linejoin="round" stroke-linecap="round"/>
<path d="M832.0,583.0 L817.8,586.9 L795.0,593.4 L762.2,601.1 L729.4,608.2 L713.0,612.0 L705.3,614.8 L700.9,618.6 L698.2,624.1 L697.7,630.0 L702.9,636.3 L701.5,643.0 L688.3,657.3 L625.0,679.3 L596.7,677.3 L580.0,673.3 L541.7,656.7 L531.7,655.7 L523.3,660.0 L495.0,701.7 L490.0,720.0 L491.7,733.3 L500.0,761.7 L503.3,766.7 L508.3,781.7 L546.7,806.7 L556.7,818.3 L563.3,830.0 L573.3,853.3 L583.3,873.3 L582.7,895.0 L550.0,920.0 L538.3,933.3 L528.3,960.0 L521.7,980.1 L520.0,991.9 L524.5,1001.0" fill="none" stroke="#fbf2b0" stroke-width="3.7" stroke-linejoin="round" stroke-linecap="round"/>
<path d="M832.0,583.0 L817.8,586.9 L795.0,593.4 L762.2,601.1 L729.4,608.2 L713.0,612.0 L705.3,614.8 L700.9,618.6 L698.2,624.1 L697.7,630.0 L702.9,636.3 L701.5,643.0 L688.3,657.3 L625.0,679.3 L596.7,677.3 L580.0,673.3 L541.7,656.7 L531.7,655.7 L523.3,660.0 L495.0,701.7 L490.0,720.0 L491.7,733.3 L500.0,761.7 L503.3,766.7 L508.3,781.7 L546.7,806.7 L556.7,818.3 L563.3,830.0 L573.3,853.3 L583.3,873.3 L582.7,895.0 L550.0,920.0 L538.3,933.3 L528.3,960.0 L521.7,980.1 L520.0,991.9 L524.5,1001.0" fill="none" stroke="#c6eabc" stroke-width="1.9" stroke-linejoin="round" stroke-linecap="round"/>
<path d="M832.0,583.0 L817.8,586.9 L795.0,593.4 L762.2,601.1 L729.4,608.2 L713.0,612.0 L705.3,614.8 L700.9,618.6 L698.2,624.1 L697.7,630.0 L702.9,636.3 L701.5,643.0 L688.3,657.3 L625.0,679.3 L596.7,677.3 L580.0,673.3 L541.7,656.7 L531.7,655.7 L523.3,660.0 L495.0,701.7 L490.0,720.0 L491.7,733.3 L500.0,761.7 L503.3,766.7 L508.3,781.7 L546.7,806.7 L556.7,818.3 L563.3,830.0 L573.3,853.3 L583.3,873.3 L582.7,895.0 L550.0,920.0 L538.3,933.3 L528.3,960.0 L521.7,980.1 L520.0,991.9 L524.5,1001.0" fill="none" stroke="#a4dc9e" stroke-width="0.6" stroke-linejoin="round" stroke-linecap="round"/>
<path d="M688.3,657.3 L690.0,665.0 L723.3,671.7 L730.0,665.0 L738.3,663.3 L748.3,670.0 L826.7,751.7 L833.3,768.3 L861.7,815.0 L871.0,845.0 L869.0,858.3 L844.0,872.7" fill="none" stroke="#a69e80" stroke-width="4.8" stroke-linejoin="round" stroke-linecap="round"/>
<path d="M688.3,657.3 L690.0,665.0 L723.3,671.7 L730.0,665.0 L738.3,663.3 L748.3,670.0 L826.7,751.7 L833.3,768.3 L861.7,815.0 L871.0,845.0 L869.0,858.3 L844.0,872.7" fill="none" stroke="#fbf2b0" stroke-width="3.7" stroke-linejoin="round" stroke-linecap="round"/>
<path d="M688.3,657.3 L690.0,665.0 L723.3,671.7 L730.0,665.0 L738.3,663.3 L748.3,670.0 L826.7,751.7 L833.3,768.3 L861.7,815.0 L871.0,845.0 L869.0,858.3 L844.0,872.7" fill="none" stroke="#c6eabc" stroke-width="1.9" stroke-linejoin="round" stroke-linecap="round"/>
<path d="M688.3,657.3 L690.0,665.0 L723.3,671.7 L730.0,665.0 L738.3,663.3 L748.3,670.0 L826.7,751.7 L833.3,768.3 L861.7,815.0 L871.0,845.0 L869.0,858.3 L844.0,872.7" fill="none" stroke="#a4dc9e" stroke-width="0.6" stroke-linejoin="round" stroke-linecap="round"/>
<path d="M844.0,872.7 L836.7,893.3 L851.7,953.3" fill="none" stroke="#a69e80" stroke-width="4.8" stroke-linejoin="round" stroke-linecap="round"/>
<path d="M844.0,872.7 L836.7,893.3 L851.7,953.3" fill="none" stroke="#fbf2b0" stroke-width="3.7" stroke-linejoin="round" stroke-linecap="round"/>
<path d="M1100.0,574.0 L1118.9,577.3 L1135.6,580.0 L1211.0,586.7 L1300.0,594.4 L1366.7,600.0 L1400.0,602.2 L1478.7,608.2 L1557.4,617.7 L1636.1,630.2 L1714.8,646.0 L1777.7,660.1 L1840.7,679.0 L1921.0,713.5" fill="none" stroke="#a69e80" stroke-width="4.8" stroke-linejoin="round" stroke-linecap="round"/>
<path d="M1100.0,574.0 L1118.9,577.3 L1135.6,580.0 L1211.0,586.7 L1300.0,594.4 L1366.7,600.0 L1400.0,602.2 L1478.7,608.2 L1557.4,617.7 L1636.1,630.2 L1714.8,646.0 L1777.7,660.1 L1840.7,679.0 L1921.0,713.5" fill="none" stroke="#fbf2b0" stroke-width="3.7" stroke-linejoin="round" stroke-linecap="round"/>
<path d="M1100.0,574.0 L1118.9,577.3 L1135.6,580.0 L1211.0,586.7 L1300.0,594.4 L1366.7,600.0 L1400.0,602.2 L1478.7,608.2 L1557.4,617.7 L1636.1,630.2 L1714.8,646.0 L1777.7,660.1 L1840.7,679.0 L1921.0,713.5" fill="none" stroke="#c6eabc" stroke-width="1.9" stroke-linejoin="round" stroke-linecap="round"/>
<path d="M1100.0,574.0 L1118.9,577.3 L1135.6,580.0 L1211.0,586.7 L1300.0,594.4 L1366.7,600.0 L1400.0,602.2 L1478.7,608.2 L1557.4,617.7 L1636.1,630.2 L1714.8,646.0 L1777.7,660.1 L1840.7,679.0 L1921.0,713.5" fill="none" stroke="#a4dc9e" stroke-width="0.6" stroke-linejoin="round" stroke-linecap="round"/>
<path d="M1136.4,582.4 L1136.4,778.0 L1130.2,792.3 L1125.0,810.6 L1136.4,829.8" fill="none" stroke="#a69e80" stroke-width="4.8" stroke-linejoin="round" stroke-linecap="round"/>
<path d="M1136.4,582.4 L1136.4,778.0 L1130.2,792.3 L1125.0,810.6 L1136.4,829.8" fill="none" stroke="#fbf2b0" stroke-width="3.7" stroke-linejoin="round" stroke-linecap="round"/>
<path d="M1143.1,132.0 L1143.8,223.8 L1143.8,262.8 L1154.7,283.1 L1159.4,298.8 L1170.3,326.9 L1198.4,372.2 L1200.0,380.0 L1203.1,382.5 L1205.6,386.7 L1213.3,407.8 L1213.3,435.6 L1216.7,441.1 L1233.3,444.4 L1268.9,447.8 L1277.8,451.1 L1288.9,457.8 L1293.3,460.0" fill="none" stroke="#a69e80" stroke-width="4.8" stroke-linejoin="round" stroke-linecap="round"/>
<path d="M1143.1,132.0 L1143.8,223.8 L1143.8,262.8 L1154.7,283.1 L1159.4,298.8 L1170.3,326.9 L1198.4,372.2 L1200.0,380.0 L1203.1,382.5 L1205.6,386.7 L1213.3,407.8 L1213.3,435.6 L1216.7,441.1 L1233.3,444.4 L1268.9,447.8 L1277.8,451.1 L1288.9,457.8 L1293.3,460.0" fill="none" stroke="#fbf2b0" stroke-width="3.7" stroke-linejoin="round" stroke-linecap="round"/>
<path d="M1143.1,132.0 L1143.8,223.8 L1143.8,262.8 L1154.7,283.1 L1159.4,298.8 L1170.3,326.9 L1198.4,372.2 L1200.0,380.0 L1203.1,382.5 L1205.6,386.7 L1213.3,407.8 L1213.3,435.6 L1216.7,441.1 L1233.3,444.4 L1268.9,447.8 L1277.8,451.1 L1288.9,457.8 L1293.3,460.0" fill="none" stroke="#c6eabc" stroke-width="1.9" stroke-linejoin="round" stroke-linecap="round"/>
<path d="M1143.1,132.0 L1143.8,223.8 L1143.8,262.8 L1154.7,283.1 L1159.4,298.8 L1170.3,326.9 L1198.4,372.2 L1200.0,380.0 L1203.1,382.5 L1205.6,386.7 L1213.3,407.8 L1213.3,435.6 L1216.7,441.1 L1233.3,444.4 L1268.9,447.8 L1277.8,451.1 L1288.9,457.8 L1293.3,460.0" fill="none" stroke="#a4dc9e" stroke-width="0.6" stroke-linejoin="round" stroke-linecap="round"/>
<path d="M1921.0,445.0 L1793.4,422.5 L1746.2,414.0 L1705.3,410.5 L1601.4,409.9 L1500.0,408.4 L1395.6,408.2 L1377.8,410.0 L1355.6,415.6 L1333.3,424.4 L1307.8,435.6 L1300.0,446.7 L1293.3,460.0 L1288.9,468.9 L1275.6,480.0" fill="none" stroke="#a69e80" stroke-width="4.8" stroke-linejoin="round" stroke-linecap="round"/>
<path d="M1921.0,445.0 L1793.4,422.5 L1746.2,414.0 L1705.3,410.5 L1601.4,409.9 L1500.0,408.4 L1395.6,408.2 L1377.8,410.0 L1355.6,415.6 L1333.3,424.4 L1307.8,435.6 L1300.0,446.7 L1293.3,460.0 L1288.9,468.9 L1275.6,480.0" fill="none" stroke="#fbf2b0" stroke-width="3.7" stroke-linejoin="round" stroke-linecap="round"/>
<path d="M1921.0,445.0 L1793.4,422.5 L1746.2,414.0 L1705.3,410.5 L1601.4,409.9 L1500.0,408.4 L1395.6,408.2 L1377.8,410.0 L1355.6,415.6 L1333.3,424.4 L1307.8,435.6 L1300.0,446.7 L1293.3,460.0 L1288.9,468.9 L1275.6,480.0" fill="none" stroke="#c6eabc" stroke-width="1.9" stroke-linejoin="round" stroke-linecap="round"/>
<path d="M1921.0,445.0 L1793.4,422.5 L1746.2,414.0 L1705.3,410.5 L1601.4,409.9 L1500.0,408.4 L1395.6,408.2 L1377.8,410.0 L1355.6,415.6 L1333.3,424.4 L1307.8,435.6 L1300.0,446.7 L1293.3,460.0 L1288.9,468.9 L1275.6,480.0" fill="none" stroke="#a4dc9e" stroke-width="0.6" stroke-linejoin="round" stroke-linecap="round"/>
<path d="M1235.6,445.6 L1236.7,453.3 L1238.9,475.6 L1242.2,478.9 L1275.6,483.3" fill="none" stroke="#a69e80" stroke-width="4.8" stroke-linejoin="round" stroke-linecap="round"/>
<path d="M1235.6,445.6 L1236.7,453.3 L1238.9,475.6 L1242.2,478.9 L1275.6,483.3" fill="none" stroke="#fbf2b0" stroke-width="3.7" stroke-linejoin="round" stroke-linecap="round"/>
<path d="M1235.6,445.6 L1236.7,453.3 L1238.9,475.6 L1242.2,478.9 L1275.6,483.3" fill="none" stroke="#c6eabc" stroke-width="1.9" stroke-linejoin="round" stroke-linecap="round"/>
<path d="M1235.6,445.6 L1236.7,453.3 L1238.9,475.6 L1242.2,478.9 L1275.6,483.3" fill="none" stroke="#a4dc9e" stroke-width="0.6" stroke-linejoin="round" stroke-linecap="round"/>
<path d="M1268.9,447.8 L1264.4,453.3 L1263.3,461.1 L1271.1,473.3 L1275.6,481.1" fill="none" stroke="#a69e80" stroke-width="4.8" stroke-linejoin="round" stroke-linecap="round"/>
<path d="M1268.9,447.8 L1264.4,453.3 L1263.3,461.1 L1271.1,473.3 L1275.6,481.1" fill="none" stroke="#fbf2b0" stroke-width="3.7" stroke-linejoin="round" stroke-linecap="round"/>
<path d="M1268.9,447.8 L1264.4,453.3 L1263.3,461.1 L1271.1,473.3 L1275.6,481.1" fill="none" stroke="#c6eabc" stroke-width="1.9" stroke-linejoin="round" stroke-linecap="round"/>
<path d="M1268.9,447.8 L1264.4,453.3 L1263.3,461.1 L1271.1,473.3 L1275.6,481.1" fill="none" stroke="#a4dc9e" stroke-width="0.6" stroke-linejoin="round" stroke-linecap="round"/>
<path d="M1262.2,495.6 L1262.2,501.1" fill="none" stroke="#a69e80" stroke-width="4.8" stroke-linejoin="round" stroke-linecap="round"/>
<path d="M1262.2,495.6 L1262.2,501.1" fill="none" stroke="#fbf2b0" stroke-width="3.7" stroke-linejoin="round" stroke-linecap="round"/>
<path d="M1313.3,435.6 L1313.3,501.1 L1305.6,501.1" fill="none" stroke="#a69e80" stroke-width="4.8" stroke-linejoin="round" stroke-linecap="round"/>
<path d="M1313.3,435.6 L1313.3,501.1 L1305.6,501.1" fill="none" stroke="#fbf2b0" stroke-width="3.7" stroke-linejoin="round" stroke-linecap="round"/>
<path d="M1601.4,409.9 L1600.8,446.1 L1617.2,527.9 L1618.8,550.0 L1626.6,559.4 L1638.6,562.6" fill="none" stroke="#a69e80" stroke-width="4.8" stroke-linejoin="round" stroke-linecap="round"/>
<path d="M1601.4,409.9 L1600.8,446.1 L1617.2,527.9 L1618.8,550.0 L1626.6,559.4 L1638.6,562.6" fill="none" stroke="#fbf2b0" stroke-width="3.7" stroke-linejoin="round" stroke-linecap="round"/>
<path d="M1601.4,409.9 L1600.8,446.1 L1617.2,527.9 L1618.8,550.0 L1626.6,559.4 L1638.6,562.6" fill="none" stroke="#c6eabc" stroke-width="1.9" stroke-linejoin="round" stroke-linecap="round"/>
<path d="M1601.4,409.9 L1600.8,446.1 L1617.2,527.9 L1618.8,550.0 L1626.6,559.4 L1638.6,562.6" fill="none" stroke="#a4dc9e" stroke-width="0.6" stroke-linejoin="round" stroke-linecap="round"/>
<path d="M1884.0,132.0 L1886.2,167.9 L1895.7,189.6 L1911.9,211.2 L1921.0,228.0" fill="none" stroke="#a69e80" stroke-width="4.8" stroke-linejoin="round" stroke-linecap="round"/>
<path d="M1884.0,132.0 L1886.2,167.9 L1895.7,189.6 L1911.9,211.2 L1921.0,228.0" fill="none" stroke="#fbf2b0" stroke-width="3.7" stroke-linejoin="round" stroke-linecap="round"/>
<path d="M1884.0,132.0 L1886.2,167.9 L1895.7,189.6 L1911.9,211.2 L1921.0,228.0" fill="none" stroke="#c6eabc" stroke-width="1.9" stroke-linejoin="round" stroke-linecap="round"/>
<path d="M1884.0,132.0 L1886.2,167.9 L1895.7,189.6 L1911.9,211.2 L1921.0,228.0" fill="none" stroke="#a4dc9e" stroke-width="0.6" stroke-linejoin="round" stroke-linecap="round"/>
<path d="M1921.0,447.3 L1768.3,417.8 L1738.4,471.3 L1727.4,479.1 L1714.8,481.4 L1697.5,478.2 L1683.3,458.7 L1677.6,447.7 L1678.6,438.2 L1687.1,431.3" fill="none" stroke="#3a6ebc" stroke-width="1.5" stroke-linejoin="round"/>
<path d="M1132.8,132.0 L1134.4,255.0 L1135.9,420.0 L1136.0,425.6 L1166.7,440.0 L1193.3,452.2 L1201.1,458.9 L1201.1,465.6 L1195.6,475.6 L1188.9,482.2" fill="none" stroke="#3a6ebc" stroke-width="1.5" stroke-linejoin="round"/>
<path d="M646.5,132.0 L647.8,162.2 L651.9,189.1 L663.9,229.4 L688.1,293.8 L720.3,342.2 L747.2,379.8 L776.7,414.7 L800.0,440.0 L830.0,470.0 L870.0,510.0 L940.0,545.0 L1040.0,565.0" fill="none" stroke="#a4d6a6" stroke-width="1.3"/>
<path d="M646.5,132.0 L647.8,162.2 L651.9,189.1 L663.9,229.4 L688.1,293.8 L720.3,342.2 L747.2,379.8 L776.7,414.7 L800.0,440.0 L830.0,470.0 L870.0,510.0 L940.0,545.0 L1040.0,565.0" fill="none" stroke="#1e3424" stroke-width="0.85" stroke-dasharray="3 2 1 2 1 2"/>
<path d="M677.9,132.0 L677.9,162.2 L681.4,191.8 L693.5,237.4 L712.3,283.1 L736.4,320.7 L766.0,363.7 L784.8,390.5 L809.0,417.4 L845.0,455.0 L885.0,490.0 L950.0,520.0 L1040.0,542.0" fill="none" stroke="#a4d6a6" stroke-width="1.3"/>
<path d="M677.9,132.0 L677.9,162.2 L681.4,191.8 L693.5,237.4 L712.3,283.1 L736.4,320.7 L766.0,363.7 L784.8,390.5 L809.0,417.4 L845.0,455.0 L885.0,490.0 L950.0,520.0 L1040.0,542.0" fill="none" stroke="#1e3424" stroke-width="0.85" stroke-dasharray="3 2 1 2 1 2"/>
<path d="M709.0,132.0 L706.9,156.9 L709.0,186.4 L719.0,226.7 L733.8,264.3 L752.6,299.2 L784.8,347.5 L809.0,379.8 L818.4,390.5 L860.0,435.0 L900.0,470.0 L960.0,500.0 L1040.0,520.0" fill="none" stroke="#a4d6a6" stroke-width="1.3"/>
<path d="M709.0,132.0 L706.9,156.9 L709.0,186.4 L719.0,226.7 L733.8,264.3 L752.6,299.2 L784.8,347.5 L809.0,379.8 L818.4,390.5 L860.0,435.0 L900.0,470.0 L960.0,500.0 L1040.0,520.0" fill="none" stroke="#1e3424" stroke-width="0.85" stroke-dasharray="3 2 1 2 1 2"/>
<path d="M1118.9,531.6 L1188.9,538.9 L1268.9,547.1 L1303.3,548.2 L1366.7,551.1 L1400.0,554.1 L1494.4,561.0 L1588.9,570.4 L1651.8,581.5 L1714.8,594.0 L1777.7,608.2 L1840.7,625.5 L1921.0,650.0" fill="none" stroke="#a4d6a6" stroke-width="1.3"/>
<path d="M1118.9,531.6 L1188.9,538.9 L1268.9,547.1 L1303.3,548.2 L1366.7,551.1 L1400.0,554.1 L1494.4,561.0 L1588.9,570.4 L1651.8,581.5 L1714.8,594.0 L1777.7,608.2 L1840.7,625.5 L1921.0,650.0" fill="none" stroke="#1e3424" stroke-width="0.85" stroke-dasharray="3 2 1 2 1 2"/>
<path d="M1118.9,552.2 L1188.9,558.9 L1266.7,566.7 L1366.7,572.2 L1400.0,574.2 L1494.4,581.5 L1588.9,594.0 L1673.9,609.8 L1746.2,625.5 L1809.2,641.3 L1872.1,660.1 L1921.0,677.0" fill="none" stroke="#a4d6a6" stroke-width="1.3"/>
<path d="M1118.9,552.2 L1188.9,558.9 L1266.7,566.7 L1366.7,572.2 L1400.0,574.2 L1494.4,581.5 L1588.9,594.0 L1673.9,609.8 L1746.2,625.5 L1809.2,641.3 L1872.1,660.1 L1921.0,677.0" fill="none" stroke="#1e3424" stroke-width="0.85" stroke-dasharray="3 2 1 2 1 2"/>
<path d="M1118.9,574.4 L1155.6,577.3 L1211.0,578.9 L1266.7,585.6 L1300.0,590.0 L1344.4,591.1 L1400.0,595.0 L1478.7,599.4 L1557.4,611.4 L1636.1,625.5 L1695.9,637.5 L1746.2,649.1 L1809.2,668.0 L1872.1,690.1 L1921.0,710.3" fill="none" stroke="#a4d6a6" stroke-width="1.3"/>
<path d="M1118.9,574.4 L1155.6,577.3 L1211.0,578.9 L1266.7,585.6 L1300.0,590.0 L1344.4,591.1 L1400.0,595.0 L1478.7,599.4 L1557.4,611.4 L1636.1,625.5 L1695.9,637.5 L1746.2,649.1 L1809.2,668.0 L1872.1,690.1 L1921.0,710.3" fill="none" stroke="#1e3424" stroke-width="0.85" stroke-dasharray="3 2 1 2 1 2"/>
<path d="M820.3,132.0 L820.3,199.4 L907.8,199.4 L1053.8,272.8 L1199.4,204.4 L1274.7,204.4 L1275.0,430.0" fill="none" stroke="#a4d6a6" stroke-width="1.3"/>
<path d="M820.3,132.0 L820.3,199.4 L907.8,199.4 L1053.8,272.8 L1199.4,204.4 L1274.7,204.4 L1275.0,430.0" fill="none" stroke="#1e3424" stroke-width="0.85" stroke-dasharray="3 2 1 2 1 2"/>
<path d="M1275.1,407.8 L1304.4,406.2 L1306.7,436.7 L1304.4,471.1 L1304.4,495.6 L1303.3,548.2 L1268.9,547.1 L1268.9,501.1 L1212.2,497.8 L1212.2,450.0 L1199.6,450.4 L1199.6,431.8 L1275.1,430.0Z" fill="none" stroke="#a4d6a6" stroke-width="1.3"/>
<path d="M1275.1,407.8 L1304.4,406.2 L1306.7,436.7 L1304.4,471.1 L1304.4,495.6 L1303.3,548.2 L1268.9,547.1 L1268.9,501.1 L1212.2,497.8 L1212.2,450.0 L1199.6,450.4 L1199.6,431.8 L1275.1,430.0Z" fill="none" stroke="#1e3424" stroke-width="0.85" stroke-dasharray="3 2 1 2 1 2"/>
<path d="M1275.1,471.1 L1304.4,471.1 L1304.4,480.0 L1275.1,480.0Z" fill="none" stroke="#a4d6a6" stroke-width="1.3"/>
<path d="M1275.1,471.1 L1304.4,471.1 L1304.4,480.0 L1275.1,480.0Z" fill="none" stroke="#1e3424" stroke-width="0.85" stroke-dasharray="3 2 1 2 1 2"/>
<path d="M1267.5,566.7 L1267.5,585.6" fill="none" stroke="#a4d6a6" stroke-width="1.3"/>
<path d="M1267.5,566.7 L1267.5,585.6" fill="none" stroke="#1e3424" stroke-width="0.85" stroke-dasharray="3 2 1 2 1 2"/>
<path d="M832.0,539.0 L817.8,545.3 L795.0,556.2 L773.1,565.0 L751.3,572.1 L729.4,578.1 L707.5,583.6 L691.1,589.6 L674.7,598.9 L661.6,605.5 L647.3,607.7 L636.4,606.6 L628.8,601.1 L623.3,598.4 L608.3,597.5 L595.8,595.8" fill="none" stroke="#a4d6a6" stroke-width="1.3"/>
<path d="M832.0,539.0 L817.8,545.3 L795.0,556.2 L773.1,565.0 L751.3,572.1 L729.4,578.1 L707.5,583.6 L691.1,589.6 L674.7,598.9 L661.6,605.5 L647.3,607.7 L636.4,606.6 L628.8,601.1 L623.3,598.4 L608.3,597.5 L595.8,595.8" fill="none" stroke="#1e3424" stroke-width="0.85" stroke-dasharray="3 2 1 2 1 2"/>
<path d="M832.0,558.0 L817.8,561.7 L805.9,565.0 L784.1,572.1 L762.2,578.1 L740.3,584.1 L718.4,589.6 L702.0,594.5 L685.6,600.5 L679.1,604.4 L676.3,608.2" fill="none" stroke="#a4d6a6" stroke-width="1.3"/>
<path d="M832.0,558.0 L817.8,561.7 L805.9,565.0 L784.1,572.1 L762.2,578.1 L740.3,584.1 L718.4,589.6 L702.0,594.5 L685.6,600.5 L679.1,604.4 L676.3,608.2" fill="none" stroke="#1e3424" stroke-width="0.85" stroke-dasharray="3 2 1 2 1 2"/>
<path d="M832.0,547.0 L817.8,552.4 L795.0,561.7 L773.1,568.8 L751.3,574.8 L729.4,580.9 L707.5,586.9 L691.1,593.4 L679.1,600.0 L669.2,607.7 L658.3,612.6 L645.2,614.2 L634.2,611.5 L626.6,606.6 L618.0,603.0 L610.0,600.0" fill="none" stroke="#a4d6a6" stroke-width="1.3"/>
<path d="M832.0,547.0 L817.8,552.4 L795.0,561.7 L773.1,568.8 L751.3,574.8 L729.4,580.9 L707.5,586.9 L691.1,593.4 L679.1,600.0 L669.2,607.7 L658.3,612.6 L645.2,614.2 L634.2,611.5 L626.6,606.6 L618.0,603.0 L610.0,600.0" fill="none" stroke="#1e3424" stroke-width="0.85" stroke-dasharray="3 2 1 2 1 2"/>
<path d="M595.8,595.8 L608.3,597.5 L610.0,600.0 L605.0,618.3 L602.5,643.3 L610.0,656.7 L613.3,662.5 L617.5,661.7 L621.7,651.7 L630.0,643.3 L640.0,638.3 L650.8,635.8 L660.0,640.0 L670.8,645.8 L680.0,640.0 L681.7,630.0 L677.5,620.0 L676.7,610.0 L676.3,608.2" fill="none" stroke="#a4d6a6" stroke-width="1.3"/>
<path d="M595.8,595.8 L608.3,597.5 L610.0,600.0 L605.0,618.3 L602.5,643.3 L610.0,656.7 L613.3,662.5 L617.5,661.7 L621.7,651.7 L630.0,643.3 L640.0,638.3 L650.8,635.8 L660.0,640.0 L670.8,645.8 L680.0,640.0 L681.7,630.0 L677.5,620.0 L676.7,610.0 L676.3,608.2" fill="none" stroke="#1e3424" stroke-width="0.85" stroke-dasharray="3 2 1 2 1 2"/>
<path d="M459.3,132.0 L476.5,147.5 L488.0,147.0 L497.4,132.0Z" fill="none" stroke="#a4d6a6" stroke-width="1.3"/>
<path d="M459.3,132.0 L476.5,147.5 L488.0,147.0 L497.4,132.0Z" fill="none" stroke="#1e3424" stroke-width="0.85" stroke-dasharray="3 2 1 2 1 2"/>
<path d="M525.9,865.5 L531.8,864.2 L536.0,852.9 L539.4,850.8 L552.9,855.4 L559.6,860.4 L568.6,873.9 L565.5,882.4 L555.4,880.7 L545.3,882.0 L531.8,878.1Z" fill="none" stroke="#a4d6a6" stroke-width="1.3"/>
<path d="M525.9,865.5 L531.8,864.2 L536.0,852.9 L539.4,850.8 L552.9,855.4 L559.6,860.4 L568.6,873.9 L565.5,882.4 L555.4,880.7 L545.3,882.0 L531.8,878.1Z" fill="none" stroke="#1e3424" stroke-width="0.85" stroke-dasharray="3 2 1 2 1 2"/>
<path d="M397.0,892.3 L413.3,896.7 L430.0,898.3 L431.7,905.0 L428.3,914.0 L397.0,914.0Z" fill="none" stroke="#a4d6a6" stroke-width="1.3"/>
<path d="M397.0,892.3 L413.3,896.7 L430.0,898.3 L431.7,905.0 L428.3,914.0 L397.0,914.0Z" fill="none" stroke="#1e3424" stroke-width="0.85" stroke-dasharray="3 2 1 2 1 2"/>
<path d="M1638.6,562.6 L1697.5,637.5" fill="none" stroke="#9ad09a" stroke-width="1"/>
<path d="M1638.6,562.6 L1697.5,637.5" fill="none" stroke="#243a28" stroke-width="0.7" stroke-dasharray="3 1.5 1 1.5"/>
<path d="M625.0,680.0 L688.3,657.3 L690.0,665.0 L723.3,671.7 L730.0,665.0 L738.3,663.3 L748.3,670.0 L826.7,751.7 L833.3,768.3 L861.7,815.0 L871.0,845.0 L869.0,858.3 L844.0,872.7 L778.3,844.0 L720.0,816.7 L675.0,781.7 L665.0,775.0 L643.3,756.7 L628.3,740.0 L626.0,730.0Z" fill="#3efeff" stroke="#2f6f8c" stroke-width="1.2" stroke-linejoin="round"/>
<path d="M625.0,680.0 L688.3,657.3 L690.0,665.0 L723.3,671.7 L730.0,665.0 L738.3,663.3 L748.3,670.0 L826.7,751.7 L833.3,768.3 L861.7,815.0 L871.0,845.0 L869.0,858.3 L844.0,872.7" fill="none" stroke="#b3ab8e" stroke-width="3.4" stroke-linejoin="round" transform="translate(0.8,-0.8)"/>
<path d="M625.0,680.0 L688.3,657.3 L690.0,665.0 L723.3,671.7 L730.0,665.0 L738.3,663.3 L748.3,670.0 L826.7,751.7 L833.3,768.3 L861.7,815.0 L871.0,845.0 L869.0,858.3 L844.0,872.7" fill="none" stroke="#e9f0b0" stroke-width="2.2" stroke-linejoin="round" transform="translate(0.8,-0.8)"/>
<path d="M625.0,680.0 L688.3,657.3 L690.0,665.0 L723.3,671.7 L730.0,665.0 L738.3,663.3 L748.3,670.0 L826.7,751.7 L833.3,768.3 L861.7,815.0 L871.0,845.0 L869.0,858.3 L844.0,872.7" fill="none" stroke="#8fe0c0" stroke-width="1" stroke-linejoin="round"/>
<path d="M1346.8,1000.0 L1585.1,973.4 L1707.3,961.2 L1921.0,940.7" fill="none" stroke="#8a7c56" stroke-width="3.6"/>
<path d="M1346.8,1000.0 L1585.1,973.4 L1707.3,961.2 L1921.0,940.7" fill="none" stroke="#d8f0d2" stroke-width="2.4"/>
<path d="M1346.8,1000.0 L1585.1,973.4 L1707.3,961.2 L1921.0,940.7" fill="none" stroke="#7a6c46" stroke-width="3.6" stroke-dasharray="0.9 5.9"/>
<text x="606.0" y="575.0" transform="rotate(6.0 606.0 575.0)" font-size="11" fill="#000" text-anchor="middle" dominant-baseline="central" textLength="52.8" lengthAdjust="spacingAndGlyphs" >Riverside St</text>
<text x="728.5" y="579.8" transform="rotate(2.5 728.5 579.8)" font-size="11" fill="#3f70c2" text-anchor="middle" dominant-baseline="central" textLength="41.4" lengthAdjust="spacingAndGlyphs" stroke="#3f70c2" stroke-width="0.3">Deep Crk</text>
<text x="785.4" y="591.2" transform="rotate(-14.5 785.4 591.2)" font-size="11" fill="#000" text-anchor="middle" dominant-baseline="central" textLength="47.3" lengthAdjust="spacingAndGlyphs" >Mallard Rd</text>
<text x="487.0" y="655.0" transform="rotate(-47.0 487.0 655.0)" font-size="11" fill="#000" text-anchor="middle" dominant-baseline="central" textLength="41.4" lengthAdjust="spacingAndGlyphs" >Deep Crk</text>
<text x="478.0" y="787.0" transform="rotate(25.0 478.0 787.0)" font-size="11" fill="#000" text-anchor="middle" dominant-baseline="central" textLength="41.4" lengthAdjust="spacingAndGlyphs" >Deep Crk</text>
<text x="497.0" y="860.0" transform="rotate(-40.0 497.0 860.0)" font-size="11" fill="#000" text-anchor="middle" dominant-baseline="central" textLength="41.4" lengthAdjust="spacingAndGlyphs" >Deep Crk</text>
<text x="460.5" y="894.5" transform="rotate(-48.0 460.5 894.5)" font-size="11" fill="#000" text-anchor="middle" dominant-baseline="central" textLength="41.4" lengthAdjust="spacingAndGlyphs" >Deep Crk</text>
<text x="478.0" y="942.0" transform="rotate(27.0 478.0 942.0)" font-size="11" fill="#000" text-anchor="middle" dominant-baseline="central" textLength="41.4" lengthAdjust="spacingAndGlyphs" >Deep Crk</text>
<text x="1142.0" y="630.0" transform="rotate(90.0 1142.0 630.0)" font-size="11" fill="#000" text-anchor="middle" dominant-baseline="central" textLength="32.7" lengthAdjust="spacingAndGlyphs" >Co 18B</text>
<text x="1131.0" y="760.0" transform="rotate(-90.0 1131.0 760.0)" font-size="11" fill="#000" text-anchor="middle" dominant-baseline="central" textLength="32.7" lengthAdjust="spacingAndGlyphs" >Co 18B</text>
<text x="1373.0" y="594.0" transform="rotate(4.0 1373.0 594.0)" font-size="11" fill="#000" text-anchor="middle" dominant-baseline="central" textLength="52.8" lengthAdjust="spacingAndGlyphs" >Riverside St</text>
<text x="1897.0" y="698.0" transform="rotate(18.0 1897.0 698.0)" font-size="11" fill="#000" text-anchor="middle" dominant-baseline="central" textLength="50.1" lengthAdjust="spacingAndGlyphs" >Riverside S</text>
<text x="1254.0" y="440.0" transform="rotate(7.0 1254.0 440.0)" font-size="11" fill="#000" text-anchor="middle" dominant-baseline="central" textLength="56.9" lengthAdjust="spacingAndGlyphs" >Pow Wow Trl</text>
<text x="1293.0" y="447.0" transform="rotate(-57.0 1293.0 447.0)" font-size="11" fill="#000" text-anchor="middle" dominant-baseline="central" textLength="48.4" lengthAdjust="spacingAndGlyphs" >Mission Rd</text>
<text x="1264.5" y="487.0" transform="rotate(0.0 1264.5 487.0)" font-size="14.5" fill="#000" text-anchor="middle" dominant-baseline="central" textLength="171.0" lengthAdjust="spacingAndGlyphs" stroke="#fff" stroke-width="2.4" paint-order="stroke" stroke-linejoin="round" >Kootenai Reservation(1800)</text>
<text x="1451.0" y="402.0" transform="rotate(0.0 1451.0 402.0)" font-size="11" fill="#000" text-anchor="middle" dominant-baseline="central" textLength="48.4" lengthAdjust="spacingAndGlyphs" >Mission Rd</text>
<text x="1765.0" y="409.0" transform="rotate(9.0 1765.0 409.0)" font-size="11" fill="#000" text-anchor="middle" dominant-baseline="central" textLength="48.4" lengthAdjust="spacingAndGlyphs" >Mission Rd</text>
<text x="1615.0" y="487.0" transform="rotate(79.0 1615.0 487.0)" font-size="11" fill="#000" text-anchor="middle" dominant-baseline="central" textLength="52.8" lengthAdjust="spacingAndGlyphs" >Hobbard Rd</text>
<text x="1893.0" y="164.0" transform="rotate(63.5 1893.0 164.0)" font-size="11" fill="#000" text-anchor="start" dominant-baseline="central" textLength="66.4" lengthAdjust="spacingAndGlyphs" >District Five Rd</text>
<text x="1643.5" y="962.0" transform="rotate(-5.4 1643.5 962.0)" font-size="11" fill="#000" text-anchor="middle" dominant-baseline="central" textLength="112.1" lengthAdjust="spacingAndGlyphs" >Spokane International RR</text></svg>
</div>
<div style="position:absolute;left:818px;top:391px;width:300px;height:329px;background:#f0f0f0;box-shadow:0 3px 9px 1px rgba(0,0,0,0.38), 0 0 2px rgba(0,0,0,0.25)"></div>
<svg class="k" width="300" height="329" viewBox="818 391 300 329" style="position:absolute;left:818px;top:391px;font-family:'Liberation Sans',sans-serif">
<defs><linearGradient id="cg" x1="0" y1="0" x2="0" y2="1"><stop offset="0" stop-color="#ffffff"/><stop offset="0.5" stop-color="#f2f2f2"/><stop offset="1" stop-color="#e2e2e2"/></linearGradient><linearGradient id="bg" x1="0" y1="0" x2="0" y2="1"><stop offset="0" stop-color="#fafafa"/><stop offset="1" stop-color="#e4e4e4"/></linearGradient><linearGradient id="tri" x1="0" y1="0" x2="0" y2="1"><stop offset="0" stop-color="#7ab6ff"/><stop offset="1" stop-color="#0a5ae0"/></linearGradient><linearGradient id="tri2" x1="0" y1="0" x2="0" y2="1"><stop offset="0" stop-color="#0a5ae0"/><stop offset="1" stop-color="#7ab6ff"/></linearGradient><linearGradient id="hg" x1="0" y1="0" x2="0" y2="1"><stop offset="0" stop-color="#f8f8f8"/><stop offset="1" stop-color="#ececec"/></linearGradient></defs>
<rect x="818" y="391" width="300" height="30" fill="#fff"/>
<rect x="818" y="421" width="300" height="299" fill="#f0f0f0"/>
<text x="826" y="410" font-size="12.3" fill="#a09ca8" class="n" textLength="107" lengthAdjust="spacingAndGlyphs">Modify Area Feature</text>
<rect x="1098" y="398" width="19" height="19" fill="#e6e6e6"/><path d="M1105,405l4.500,4.500M1109.500,405l-4.500,4.500" stroke="#f6f6f6" stroke-width="1.200"/>
<text x="828.500" y="448" font-size="11" textLength="52.500" lengthAdjust="spacingAndGlyphs">Geography</text>
<rect x="890.500" y="433.500" width="216" height="21" rx="3" fill="url(#cg)" stroke="#a2a2a2"/>
<path d="M1085.500,436v16" stroke="#d0d0d0"/>
<path d="M1091.500,442l4,-4.200 4,4.200zM1091.500,446l4,4.200 4,-4.200z" fill="#111"/>
<text x="894" y="448" font-size="11" textLength="118" lengthAdjust="spacingAndGlyphs">Reservation / Trust Land</text>
<rect x="824.5" y="469.500" width="29.0" height="26" rx="3" fill="#cdcdcd" stroke="#9c9c9c"/>
<rect x="856.500" y="469.500" width="10" height="26" rx="3" fill="#cdcdcd" stroke="#9c9c9c"/>
<path d="M857.500,480.500h8l-4,4.500z" fill="#000"/>
<rect x="828" y="473" width="15.500" height="15" fill="#0f75bc"/><rect x="827.500" y="472.500" width="22" height="19" fill="none" stroke="#111" stroke-width="1.300" stroke-dasharray="2.400 1.600"/>
<path d="M837.0,479.0 L837.0,491.4 L839.9,488.7 L842.3,493.8 L844.6,492.7 L842.1,487.7 L846.1,487.7Z" fill="#e8e8e8" stroke="#222" stroke-width="1" stroke-linejoin="round" transform="rotate(-24 837 479)"/>
<rect x="873.5" y="470" width="28.5" height="25" rx="3" fill="url(#bg)" stroke="#cfcfcf"/>
<path d="M884,476h6.500v4.500h4.500v6.500h-4.500v4.500h-6.500v-4.500h-4.500v-6.500h4.500z" fill="none" stroke="#a6a6a6" stroke-width="3.400" stroke-linejoin="round" transform="translate(0,-1)"/>
<path d="M884,476h6.500v4.500h4.500v6.500h-4.500v4.500h-6.500v-4.500h-4.500v-6.500h4.500z" fill="#a4a4a4" stroke="#fbfbfb" stroke-width="1.800" stroke-linejoin="round" transform="translate(0,-1)"/>
<rect x="908.5" y="470" width="28.5" height="25" rx="3" fill="url(#bg)" stroke="#cfcfcf"/>
<rect x="912.500" y="477" width="19.500" height="11" rx="2.500" fill="#fafafa" stroke="#a0a0a0" stroke-width="0.800"/><rect x="915" y="480" width="14.500" height="5" fill="#a4a4a4"/>
<rect x="943.5" y="470" width="28.5" height="25" rx="3" fill="url(#bg)" stroke="#a4a4a4"/>
<path d="M957.200,476.500q1,-1 2,0l8.500,9q1,2 -1,2.500h-17q-2,-0.500 -1,-2.500z" fill="url(#tri)" stroke="#0a3cc0" stroke-width="0.900"/>
<rect x="978.5" y="470" width="28.5" height="25" rx="3" fill="url(#bg)" stroke="#a4a4a4"/>
<path d="M994.200,488.500q-1,1 -2,0l-8.500,-9q-1,-2 1,-2.500h17q2,0.500 1,2.500z" fill="url(#tri2)" stroke="#0a3cc0" stroke-width="0.900"/>
<rect x="1013.5" y="470" width="28.5" height="25" rx="3" fill="url(#bg)" stroke="#a4a4a4"/>
<path d="M1016.500,471.500h15l4.500,12v10h-16z" fill="#1f5f96" stroke="#1a3a5a" stroke-width="0.600"/><path d="M1019,473l3,8 -2,11M1026,472l1,9 4,4M1017.500,479l9,1 8,-3M1020,488l7,-3 1,-4M1022,481l5,4" stroke="#e8f020" stroke-width="1" fill="none"/><rect x="1029.500" y="485.500" width="8.500" height="8.500" fill="#4a9048" stroke="#d8e8d8" stroke-width="0.500"/><path d="M1031.200,489.800h5M1033.700,487.300v5" stroke="#fff" stroke-width="1.500"/>
<rect x="1048.5" y="470" width="28.5" height="25" rx="3" fill="url(#bg)" stroke="#cfcfcf"/>
<rect x="1052.500" y="472.500" width="19.500" height="20" fill="#f4f4f4" stroke="#b0b0b0" stroke-width="0.800"/><rect x="1053" y="473" width="18.500" height="3" fill="#c4c4c4"/><path d="M1052.500,479h19.500M1052.500,482.500h19.500M1052.500,486h19.500M1052.500,489.500h19.500M1058.500,472.500v20M1065.500,472.500v20" stroke="#b4b4b4" stroke-width="0.800"/><path d="M1069,476l2,1.500 -8,12 -3,1.500 0.800,-3z" fill="#dcdcdc" stroke="#c4c4c4" stroke-width="0.500"/>
<rect x="1083.5" y="470" width="28.5" height="25" rx="3" fill="url(#bg)" stroke="#cfcfcf"/>
<rect x="1087" y="472" width="20.500" height="21" rx="3" fill="#a6a6a6"/><path d="M1091,476l12.500,13M1103.500,476l-12.500,13" stroke="#f2f2f2" stroke-width="3.200" stroke-linecap="round"/>
<rect x="824.500" y="503.500" width="287" height="211" fill="#fff" stroke="#a0a0a0"/>
<rect x="825" y="504" width="286" height="21" fill="url(#hg)"/><rect x="825" y="525" width="211" height="1" fill="#c8c8c8"/><rect x="1035" y="507" width="1" height="17" fill="#d4d4d4"/>
<text x="930" y="520" font-size="11" text-anchor="middle">Info</text>
<rect x="825" y="547" width="211" height="21" fill="#f6f6f6"/>
<text x="829" y="541" font-size="11" textLength="203" lengthAdjust="spacingAndGlyphs">1800-Kootenai Off-Reservation Trust Land</text>
<text x="829" y="562" font-size="11" textLength="130.500" lengthAdjust="spacingAndGlyphs">1800-Kootenai Reservation</text>
</svg>
<div id="status" class="abs"><svg width="1920" height="38" viewBox="0 1002 1920 38" class="k" style="position:absolute;left:0;top:0;font-family:'Liberation Sans',sans-serif">
<defs><linearGradient id="sg" x1="0" y1="0" x2="0" y2="1"><stop offset="0" stop-color="#ffffff"/><stop offset="1" stop-color="#e6e6e6"/></linearGradient></defs>
<text x="7" y="1025" font-size="11" textLength="209.500" lengthAdjust="spacingAndGlyphs">1 feature(s) selected on layer faces_16021.</text>
<rect x="974.500" y="1012.500" width="19" height="17" rx="2.500" fill="#e6e6e6" stroke="#8a8a8a"/><ellipse cx="980.500" cy="1018" rx="2.600" ry="4" fill="#f4f4f4" stroke="#111" stroke-width="1.500" transform="rotate(-20 980.5 1018)"/><path d="M979.500,1015.500l2.500,5.500" stroke="#111" stroke-width="1"/><circle cx="986" cy="1023.500" r="3.400" fill="#f4f4f4" stroke="#111" stroke-width="1.600"/><circle cx="986" cy="1023.500" r="1" fill="#111"/><path d="M982,1021.500l2,1.500M986.500,1016.500l3,-2M988,1018.500l2.500,-1M978,1025l2,1.500" stroke="#333" stroke-width="0.800"/>
<text x="1002.700" y="1025" font-size="11" textLength="56.500" lengthAdjust="spacingAndGlyphs">Coordinate:</text>
<rect x="1069.500" y="1012.500" width="299" height="17" rx="2" fill="#fff" stroke="#a4a4a4"/>
<text x="1165.700" y="1025" font-size="11" textLength="105.500" lengthAdjust="spacingAndGlyphs">-116.39710,48.70990</text>
<text x="1377.300" y="1025" font-size="11" textLength="25" lengthAdjust="spacingAndGlyphs">Scale</text>
<rect x="1415.500" y="1012.500" width="91" height="17" rx="2.500" fill="#fff" stroke="#a4a4a4"/><rect x="1487" y="1013" width="19" height="16" fill="url(#sg)"/><path d="M1486.500,1013v16" stroke="#b8b8b8"/><path d="M1491.500,1019l4,4 4,-4" fill="none" stroke="#111" stroke-width="2"/>
<text x="1420.700" y="1025.500" font-size="11" textLength="37" lengthAdjust="spacingAndGlyphs">1:6,819</text>
<text x="1515" y="1025" font-size="11" textLength="45" lengthAdjust="spacingAndGlyphs">Rotation:</text>
<rect x="1570.500" y="1006.500" width="105.500" height="30" rx="2" fill="#fff" stroke="#9c9c9c"/><rect x="1660.500" y="1007" width="15" height="29" fill="url(#sg)"/><path d="M1660.500,1007v29M1660.500,1021.500h15" stroke="#c4c4c4"/><path d="M1664.500,1015.500l3.500,-3.800 3.500,3.800zM1664.500,1026.500l3.500,3.800 3.500,-3.800z" fill="#111"/>
<text x="1575.700" y="1026" font-size="11" textLength="15.500" lengthAdjust="spacingAndGlyphs">0.0</text>
<rect x="1684.500" y="1015.500" width="12" height="12" fill="#fff" stroke="#b4b4b4"/><path d="M1686.700,1022.300l1.200,-1.200 2,2.300c1.500,-3 3,-5.200 4.800,-6.700l0.700,0.800c-2,2.500 -3.500,5.500 -4.800,8.800h-1z" fill="#000"/>
<text x="1701.300" y="1025.500" font-size="11" textLength="34.500" lengthAdjust="spacingAndGlyphs">Render</text>
<circle cx="1761" cy="1021" r="6.800" fill="#c8c8c8" stroke="#1a1a1a" stroke-width="1.700"/><path d="M1754.500,1021h13M1761,1014.500v13" stroke="#1a1a1a" stroke-width="1.100" fill="none"/><ellipse cx="1761" cy="1021" rx="3.200" ry="6.500" fill="none" stroke="#1a1a1a" stroke-width="1.100"/><ellipse cx="1761" cy="1021" rx="6.500" ry="3.200" fill="none" stroke="#1a1a1a" stroke-width="1.100"/>
<text x="1772" y="1025" font-size="11" textLength="84.500" lengthAdjust="spacingAndGlyphs">EPSG:4269 (OTF)</text>
<path d="M1884,1020.500c0,-8 16.500,-8 16.500,0c0,4 -4,6 -7,6l1.500,3.500 -5,-3.500c-3,-0.500 -6,-2.500 -6,-6z" fill="#7a7a7a"/>
</svg></div>
<div id="taskbar" class="abs"><svg width="1920" height="40" viewBox="0 1040 1920 40" style="position:absolute;left:0;top:0;font-family:'Liberation Sans',sans-serif">
<defs><linearGradient id="tb" x1="0" y1="0" x2="1" y2="0"><stop offset="0" stop-color="#05070c"/><stop offset="0.6" stop-color="#04060c"/><stop offset="0.8" stop-color="#070b16"/><stop offset="1" stop-color="#060a12"/></linearGradient></defs>
<rect x="0" y="1040" width="1920" height="40" fill="url(#tb)"/>
<rect x="48" y="1040" width="344" height="40" fill="#363636"/>
<path d="M16,1054.300l6.500,-0.900v6.100h-6.500zM23.500,1053.200l8.800,-1.300v7.600h-8.800zM16,1060.500h6.500v6.100l-6.500,-0.900zM23.500,1060.500h8.800v7.600l-8.800,-1.300z" fill="#fff"/>
<circle cx="67.700" cy="1060" r="9" fill="none" stroke="#fff" stroke-width="2.600"/>
<text x="84.700" y="1065.500" font-size="15" fill="#c4c4c4" textLength="108" lengthAdjust="spacingAndGlyphs">Ask me anything</text>
<rect x="368.500" y="1052" width="5" height="10.500" rx="2.500" fill="none" stroke="#b0b0b0" stroke-width="1.100"/><path d="M366,1059.500c0,7 10,7 10,0M371,1064.800v3.500" fill="none" stroke="#b0b0b0" stroke-width="1.100"/>
<rect x="410.500" y="1053.500" width="11" height="13" fill="none" stroke="#fff" stroke-width="1.300"/><path d="M408,1055.500h-2v9h2M424,1055.500h2v9h-2" fill="none" stroke="#fff" stroke-width="1.200"/>
<rect x="456.500" y="1052.500" width="21" height="14.500" fill="#3ea4e8" stroke="#1e78c0" stroke-width="0.800"/><circle cx="463" cy="1058" r="3.300" fill="#f0c030"/><path d="M463,1058v-3.300a3.300,3.300 0 0,1 3.300,3.300z" fill="#e8f4ff"/><path d="M469,1055h6M469,1058h6M469,1061h6" stroke="#d8ecfc" stroke-width="1.300"/><path d="M459,1064h9" stroke="#f0c030" stroke-width="1"/>
<path d="M506.500,1061.500c0,-7 4,-12 10.500,-12c6,0 9.500,4.500 9.500,10v2h-13.500c0.500,3.500 3,5 6.500,5c2.500,0 4.500,-0.700 6,-1.700v4.200c-2,1 -4.500,1.700 -7.500,1.700c-6.500,0 -11,-4 -11,-9.500c0,-3.500 2,-6.500 5,-8c-1.500,1.500 -2.300,3.500 -2.300,5.500zM513,1057.500h8c0,-2.500 -1.500,-4 -4,-4c-2.500,0 -3.800,1.800 -4,4z" fill="#1e7ad8"/>
<path d="M554.500,1052h7l1.500,2h11.500v14h-20z" fill="#f0c850"/><rect x="554.500" y="1056" width="20" height="12" fill="#fbe28a"/><path d="M560.500,1068v-5.500h8v5.500h-2.500v-3h-3v3z" fill="#3a9ae0"/>
<rect x="603.500" y="1052" width="19" height="16" fill="#6ab0dc" stroke="#3a7aac" stroke-width="0.800"/><circle cx="612.500" cy="1060.500" r="5.800" fill="#f08018"/><path d="M610.500,1057.500v6l5,-3z" fill="#fff"/>
<defs><linearGradient id="acg" x1="0" y1="0" x2="0" y2="1"><stop offset="0" stop-color="#d06a92"/><stop offset="0.5" stop-color="#e6b0c6"/><stop offset="0.55" stop-color="#c04a78"/><stop offset="1" stop-color="#b03a68"/></linearGradient><linearGradient id="exg" x1="0" y1="0" x2="0" y2="1"><stop offset="0" stop-color="#8ed070"/><stop offset="0.5" stop-color="#c8e8bc"/><stop offset="1" stop-color="#68b050"/></linearGradient><linearGradient id="wdg" x1="0" y1="0" x2="1" y2="0"><stop offset="0" stop-color="#2a52a8"/><stop offset="1" stop-color="#88a8dc"/></linearGradient><linearGradient id="olg" x1="0" y1="0" x2="0" y2="1"><stop offset="0" stop-color="#f8b840"/><stop offset="0.5" stop-color="#fce4b0"/><stop offset="1" stop-color="#f0a020"/></linearGradient><linearGradient id="ppg" x1="0" y1="0" x2="0" y2="1"><stop offset="0" stop-color="#f07040"/><stop offset="0.5" stop-color="#fcd8c8"/><stop offset="1" stop-color="#e86030"/></linearGradient></defs>
<path d="M651,1068v-14q0,-6 6,-6h14v20z" fill="url(#acg)"/>
<circle cx="667.500" cy="1055.500" r="4.600" fill="#fff"/><circle cx="668.800" cy="1054.300" r="1.300" fill="#c04a78"/><path d="M664.500,1058.500l-9.500,8.500" stroke="#fff" stroke-width="3.200"/><path d="M659,1063l2,2M656.500,1065l2,2" stroke="#fff" stroke-width="1.600"/>
<path d="M700,1068v-14q0,-6 6,-6h14v20z" fill="url(#exg)" stroke="#5ab040" stroke-width="0.600"/>
<path d="M707.500,1054.500l15.500,1v14.500l-15.500,-2z" fill="#eef6e8"/><path d="M716,1057.500h5.500v2.500h-5.500zM716,1061.500h5.500v2.500h-5.500zM716,1065.500h5.500v2.500h-5.500zM709,1064.500h5.500v2.300h-5.500zM703.500,1063.500h4.500v2.500h-4.500z" fill="#6ab050"/>
<path d="M705,1054.500l8,7.500M713,1054.500l-8,7.500" stroke="#1e6a1a" stroke-width="2.600"/>
<path d="M750.500,1054.500l20.500,-3v20.500l-20.500,-3z" fill="#fff"/><path d="M755,1054c0,-7.500 8,-7.500 8.500,-1.500M758,1053.500c0,-7 8,-7 8.500,-1.500" fill="none" stroke="#fff" stroke-width="1.100"/>
<path d="M753,1058.500l5,-0.500v4.500h-5zM759.300,1058l6,-0.700v5.200h-6zM753,1063.500h5v4.500l-5,-0.600zM759.300,1063.500h6v5.400l-6,-0.800z" fill="#06080e"/>
<path d="M798,1067.500v-13.500q0,-6 6,-6h11v19.500z" fill="url(#wdg)"/>
<path d="M805.500,1051.500l15,-1v19.500l-15,-1.500z" fill="#f4f8ff" stroke="#a8bce0" stroke-width="0.500"/><path d="M807.500,1061.800l11.500,0.300M807.500,1064l11.500,0.400M807.500,1066.200l11.500,0.500M814.500,1054.500h4.500M814.500,1057h4.500" stroke="#2a52b0" stroke-width="1.100"/><text x="806.500" y="1059.500" font-size="8.500" font-weight="bold" font-style="italic" fill="#2a4ea8">W</text>
<rect x="790" y="1078" width="40" height="2" fill="#76b9ed"/>
<path d="M847,1067.500v-13.500q0,-6 6,-6h14v19.500z" fill="url(#olg)"/>
<path d="M852,1056l18,-2v12l-18,1.500z" fill="#fff8e8" stroke="#e8b050" stroke-width="0.500"/><path d="M852,1056l8.500,6.500 9.500,-8.500" fill="none" stroke="#e0a030" stroke-width="0.800"/><circle cx="859.500" cy="1062.500" r="6" fill="#f8cc38" stroke="#e8a818" stroke-width="0.800"/><path d="M856,1060.500l3.500,2.800 4,-3" stroke="#c88808" stroke-width="1.100" fill="none"/>
<path d="M896,1067.500v-13.500q0,-6 6,-6h14v19.500z" fill="url(#ppg)"/>
<path d="M899.500,1055.500l19.500,-1.500v15.500l-19.500,-1.500z" fill="#fdeee6" stroke="#f0a080" stroke-width="0.500"/><path d="M901.500,1057.500l15.500,-1v10.500l-15.500,-1z" fill="#e8501e"/><circle cx="912.800" cy="1061.300" r="2.700" fill="#fff"/><path d="M912.800,1061.300v-2.700a2.700,2.700 0 0,1 2.700,2.700z" fill="#f8a080"/><path d="M903.500,1059.500h4.500M903.500,1061.500h4.500M903.500,1063.500h4.500" stroke="#fff" stroke-width="1.100"/>
<circle cx="957" cy="1060" r="10.500" fill="#e8412c"/><path d="M957,1060l-9.100,-5.250a10.500,10.500 0 0,0 4.400,14.700z" fill="#2aa048"/><path d="M957,1060l-4.700,9.450a10.500,10.500 0 0,0 14.900,-9.450z" fill="#f8c828"/><path d="M957,1060h10.200a10.500,10.500 0 0,1 -9.500,10.450z" fill="#f8c828"/><circle cx="957" cy="1060" r="4.800" fill="#fff"/><circle cx="957" cy="1060" r="3.700" fill="#4a8af4"/>
<rect x="982" y="1040" width="48" height="40" fill="#33363c"/><rect x="982" y="1078" width="48" height="2" fill="#76b9ed"/>
<text x="996.500" y="1068" font-size="21" font-weight="bold" font-family="Liberation Serif,serif" fill="#dcec5c">Q</text><path d="M1000,1066.500l12,-16" stroke="#1e8a22" stroke-width="1.800"/><path d="M1008.500,1049.500l5.500,-1.500 -1.500,5.500z" fill="#1e8a22"/><path d="M997,1066l4,-1 -1,3.500z" fill="#145a18"/>
<rect x="1643.500" y="1057" width="7" height="10" rx="1" fill="none" stroke="#fff" stroke-width="1.100"/><rect x="1644.800" y="1052.500" width="4.500" height="4.500" fill="none" stroke="#fff" stroke-width="1"/><path d="M1650.500,1065.500l1.500,1.500 2.500,-3" stroke="#fff" stroke-width="0.900" fill="none"/>
<path d="M1666,1065.500c-4,0 -4,-5 -0.500,-5.500c0.500,-4 6,-4.500 7.500,-1.500c3,-1 5.500,1.500 4.500,3.500c2.500,0.500 2,3.500 -0.500,3.500z" fill="#8a8a8a"/>
<circle cx="1695" cy="1060" r="6.300" fill="none" stroke="#d8d8d8" stroke-width="1.400"/><circle cx="1695" cy="1060" r="3.300" fill="none" stroke="#d8d8d8" stroke-width="1.200"/><circle cx="1695" cy="1060" r="1" fill="#d8d8d8"/>
<path d="M1711,1059.500h5l3.500,-6h2l-1.500,6h4.500l1.500,-1.500h1l-0.800,2.500 0.800,2.500h-1l-1.500,-1.500h-4.500l1.500,6h-2l-3.500,-6h-5c-1,0 -1,-2 0,-2z" fill="none" stroke="#fff" stroke-width="1.100" stroke-linejoin="round"/>
<circle cx="1742" cy="1060.500" r="6.500" fill="#fff" stroke="#f0c010" stroke-width="1.800"/><path d="M1742,1057v4l2.500,1" stroke="#333" stroke-width="1" fill="none"/><path d="M1744,1058l5,-6" stroke="#e8d060" stroke-width="1"/><circle cx="1746.500" cy="1064" r="4" fill="#2aa838"/><path d="M1744.500,1064l1.500,1.500 2.500,-3" stroke="#fff" stroke-width="1.100" fill="none"/>
<rect x="1760" y="1055" width="12.500" height="11.500" fill="#e01818"/><path d="M1762,1064.500c3,-2 5,-5 5,-8c0,3 2,6 5,7.500c-3,-0.500 -7,-0.500 -10,0.500z" fill="none" stroke="#fff" stroke-width="0.900"/><circle cx="1771.500" cy="1056" r="2" fill="#f8d8a0" stroke="#e04018" stroke-width="0.600"/>
<path d="M1783,1057.500h2.500l3.500,-3v12l-3.500,-3h-2.500z" fill="none" stroke="#fff" stroke-width="1.100" stroke-linejoin="round"/><path d="M1791.500,1057.500q2,3 0,6" stroke="#fff" stroke-width="1" fill="none"/><path d="M1794,1055.500q3,5 0,10" stroke="#bbb" stroke-width="1" fill="none"/><path d="M1796.500,1053.500q4,7 0,14" stroke="#777" stroke-width="1" fill="none"/>
<text x="1813.700" y="1055" font-size="12" fill="#fff" textLength="42.500" lengthAdjust="spacingAndGlyphs">2:15 PM</text>
<text x="1809" y="1073" font-size="12" fill="#fff" textLength="52" lengthAdjust="spacingAndGlyphs">12/7/2016</text>
<path d="M1879.500,1053.500h15.500v10.500h-6l-2,2.500 -2,-2.500h-5.500z" fill="none" stroke="#fff" stroke-width="1.200"/>
<rect x="1915" y="1040" width="1" height="40" fill="#3a3a3a"/>
</svg></div>
</body></html>
